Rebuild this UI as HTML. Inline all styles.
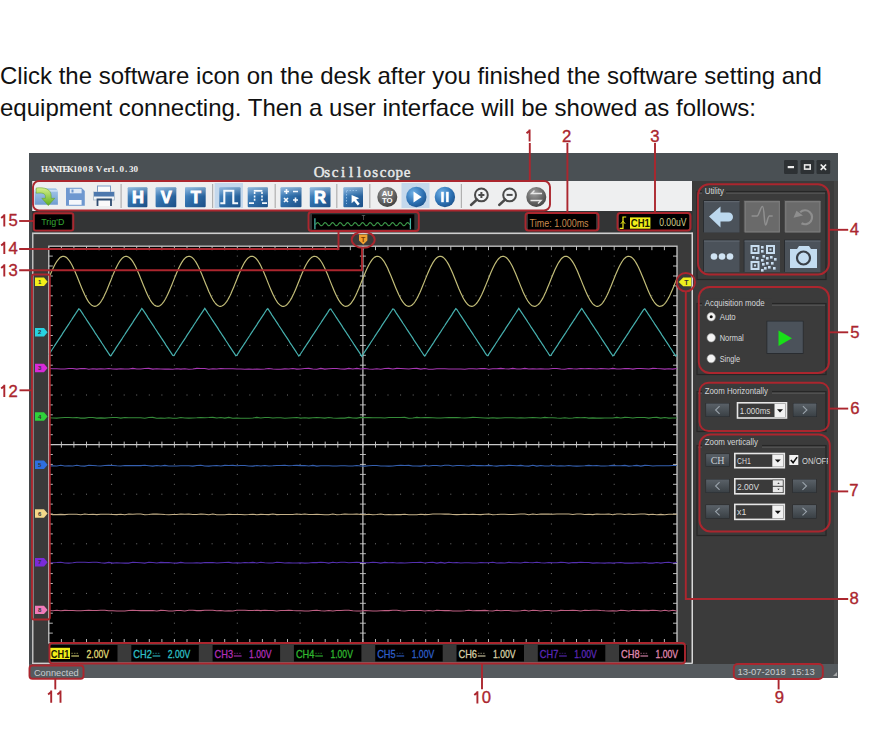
<!DOCTYPE html>
<html><head><meta charset="utf-8"><style>
html,body{margin:0;padding:0;background:#fff;width:871px;height:729px;overflow:hidden}
.p{position:absolute;left:0;font-family:"Liberation Sans",sans-serif;font-size:24px;color:#111;white-space:nowrap;line-height:1}
svg{position:absolute;left:0;top:0}
</style></head><body>
<div class="p" style="top:63.8px">Click the software icon on the desk after you finished the software setting and</div>
<div class="p" style="top:96.4px">equipment connecting. Then a user interface will be showed as follows:</div>
<svg width="871" height="729" viewBox="0 0 871 729" font-family="Liberation Sans">
<defs>
<linearGradient id="gblue" x1="0" y1="0" x2="1" y2="1"><stop offset="0" stop-color="#5b97cf"/><stop offset="0.45" stop-color="#2f6fab"/><stop offset="1" stop-color="#1c4f86"/></linearGradient>
<linearGradient id="ghl" x1="0" y1="0" x2="0" y2="1"><stop offset="0" stop-color="#ffffff" stop-opacity="0.35"/><stop offset="1" stop-color="#ffffff" stop-opacity="0"/></linearGradient>
<linearGradient id="gfold" x1="0" y1="0" x2="0" y2="1"><stop offset="0" stop-color="#a9c9ea"/><stop offset="1" stop-color="#6f9dd0"/></linearGradient>
<linearGradient id="ggreen" x1="0" y1="0" x2="0" y2="1"><stop offset="0" stop-color="#d6f08a"/><stop offset="1" stop-color="#5eae1e"/></linearGradient>
<radialGradient id="ggray" cx="0.4" cy="0.3" r="0.75"><stop offset="0" stop-color="#9a9a9a"/><stop offset="1" stop-color="#3c3c3c"/></radialGradient>
<radialGradient id="ggray2" cx="0.4" cy="0.3" r="0.75"><stop offset="0" stop-color="#a0a0a0"/><stop offset="1" stop-color="#404040"/></radialGradient>
<radialGradient id="gcirc" cx="0.35" cy="0.3" r="0.8"><stop offset="0" stop-color="#6fb0e6"/><stop offset="0.6" stop-color="#2e72b4"/><stop offset="1" stop-color="#1a4f88"/></radialGradient>
<linearGradient id="gbtn" x1="0" y1="0" x2="0" y2="1"><stop offset="0" stop-color="#5a6168"/><stop offset="1" stop-color="#3a4045"/></linearGradient>
</defs>
<rect x="29" y="153" width="809" height="525" fill="#3a3a3a"/>
<rect x="29" y="153" width="809" height="28" fill="#4a5054"/>
<text x="44.6 50.2 55.7 60.4 65.4 70.5 75.2 79.8 85 90.8 99 105.6 109.5 113 116.8 121.7 126 131.3 135.8" y="171.6" font-family="Liberation Serif" font-weight="bold" font-size="9" fill="#f2f2f2" text-anchor="middle">HANTEK1008Ver1.0.30</text>
<text x="319.2 327.2 335.2 343.2 351.2 359.2 367.2 375.2 383.2 391.2 399.2 407.2" y="176.6" font-family="Liberation Serif" font-size="15" fill="#e8eaea" stroke="#e8eaea" stroke-width="0.45" text-anchor="middle">Oscilloscope</text>
<rect x="784" y="160" width="13.7" height="14" rx="1.2" fill="#2d3134"/>
<rect x="787.7" y="166" width="6.3" height="2.2" fill="#eeeeee"/>
<rect x="800.5" y="160" width="13.7" height="14" rx="1.2" fill="#2d3134"/>
<rect x="804.6" y="164.9" width="5.6" height="4.2" fill="none" stroke="#e8e8e8" stroke-width="1.6"/>
<rect x="816.5" y="160" width="13.7" height="14" rx="1.2" fill="#2d3134"/>
<path d="M820.7 164.5 L826.1 169.8 M826.1 164.5 L820.7 169.8" stroke="#f0f0f0" stroke-width="1.7"/>
<rect x="32" y="181" width="660" height="30" fill="#eeeff0"/>
<rect x="29" y="211" width="664" height="22" fill="#333435"/>
<rect x="29" y="181" width="3.2" height="483" fill="#43474a"/>
<rect x="32" y="232.5" width="660.5" height="1.6" fill="#cfcfcf"/>
<rect x="32" y="233" width="1.5" height="431" fill="#bdbdbd"/>
<rect x="691.5" y="232.5" width="1.6" height="431" fill="#d8d8d8"/>
<rect x="32" y="662.6" width="660.5" height="1.5" fill="#cfcfcf"/>
<rect x="29" y="664" width="809" height="14" fill="#555a5e"/>
<text x="33.9" y="675.7" font-family="Liberation Sans" font-size="9.7" fill="#c8ccd0" textLength="44.8" lengthAdjust="spacingAndGlyphs">Connected</text>
<text x="737.4" y="675.4" font-family="Liberation Sans" font-size="9" fill="#c8ccd0" textLength="77.3" lengthAdjust="spacingAndGlyphs">13-07-2018&#160;&#160;15:13</text>
<rect x="693" y="181" width="145" height="483" fill="#3b3b3b"/>
<rect x="834" y="181" width="4" height="483" fill="#454545"/>
<rect x="48.8" y="246.2" width="628.2" height="396.8" fill="#000"/>
<path d="M111.1 256.1h1M111.1 266h1M111.1 276h1M111.1 285.9h1M111.1 305.7h1M111.1 315.6h1M111.1 325.6h1M111.1 335.5h1M111.1 355.3h1M111.1 365.2h1M111.1 375.2h1M111.1 385.1h1M111.1 404.9h1M111.1 414.8h1M111.1 424.8h1M111.1 434.7h1M111.1 454.5h1M111.1 464.4h1M111.1 474.4h1M111.1 484.3h1M111.1 504.1h1M111.1 514h1M111.1 524h1M111.1 533.9h1M111.1 553.7h1M111.1 563.6h1M111.1 573.6h1M111.1 583.5h1M111.1 603.3h1M111.1 613.2h1M111.1 623.2h1M111.1 633.1h1M173.9 256.1h1M173.9 266h1M173.9 276h1M173.9 285.9h1M173.9 305.7h1M173.9 315.6h1M173.9 325.6h1M173.9 335.5h1M173.9 355.3h1M173.9 365.2h1M173.9 375.2h1M173.9 385.1h1M173.9 404.9h1M173.9 414.8h1M173.9 424.8h1M173.9 434.7h1M173.9 454.5h1M173.9 464.4h1M173.9 474.4h1M173.9 484.3h1M173.9 504.1h1M173.9 514h1M173.9 524h1M173.9 533.9h1M173.9 553.7h1M173.9 563.6h1M173.9 573.6h1M173.9 583.5h1M173.9 603.3h1M173.9 613.2h1M173.9 623.2h1M173.9 633.1h1M236.8 256.1h1M236.8 266h1M236.8 276h1M236.8 285.9h1M236.8 305.7h1M236.8 315.6h1M236.8 325.6h1M236.8 335.5h1M236.8 355.3h1M236.8 365.2h1M236.8 375.2h1M236.8 385.1h1M236.8 404.9h1M236.8 414.8h1M236.8 424.8h1M236.8 434.7h1M236.8 454.5h1M236.8 464.4h1M236.8 474.4h1M236.8 484.3h1M236.8 504.1h1M236.8 514h1M236.8 524h1M236.8 533.9h1M236.8 553.7h1M236.8 563.6h1M236.8 573.6h1M236.8 583.5h1M236.8 603.3h1M236.8 613.2h1M236.8 623.2h1M236.8 633.1h1M299.6 256.1h1M299.6 266h1M299.6 276h1M299.6 285.9h1M299.6 305.7h1M299.6 315.6h1M299.6 325.6h1M299.6 335.5h1M299.6 355.3h1M299.6 365.2h1M299.6 375.2h1M299.6 385.1h1M299.6 404.9h1M299.6 414.8h1M299.6 424.8h1M299.6 434.7h1M299.6 454.5h1M299.6 464.4h1M299.6 474.4h1M299.6 484.3h1M299.6 504.1h1M299.6 514h1M299.6 524h1M299.6 533.9h1M299.6 553.7h1M299.6 563.6h1M299.6 573.6h1M299.6 583.5h1M299.6 603.3h1M299.6 613.2h1M299.6 623.2h1M299.6 633.1h1M425.2 256.1h1M425.2 266h1M425.2 276h1M425.2 285.9h1M425.2 305.7h1M425.2 315.6h1M425.2 325.6h1M425.2 335.5h1M425.2 355.3h1M425.2 365.2h1M425.2 375.2h1M425.2 385.1h1M425.2 404.9h1M425.2 414.8h1M425.2 424.8h1M425.2 434.7h1M425.2 454.5h1M425.2 464.4h1M425.2 474.4h1M425.2 484.3h1M425.2 504.1h1M425.2 514h1M425.2 524h1M425.2 533.9h1M425.2 553.7h1M425.2 563.6h1M425.2 573.6h1M425.2 583.5h1M425.2 603.3h1M425.2 613.2h1M425.2 623.2h1M425.2 633.1h1M488 256.1h1M488 266h1M488 276h1M488 285.9h1M488 305.7h1M488 315.6h1M488 325.6h1M488 335.5h1M488 355.3h1M488 365.2h1M488 375.2h1M488 385.1h1M488 404.9h1M488 414.8h1M488 424.8h1M488 434.7h1M488 454.5h1M488 464.4h1M488 474.4h1M488 484.3h1M488 504.1h1M488 514h1M488 524h1M488 533.9h1M488 553.7h1M488 563.6h1M488 573.6h1M488 583.5h1M488 603.3h1M488 613.2h1M488 623.2h1M488 633.1h1M550.9 256.1h1M550.9 266h1M550.9 276h1M550.9 285.9h1M550.9 305.7h1M550.9 315.6h1M550.9 325.6h1M550.9 335.5h1M550.9 355.3h1M550.9 365.2h1M550.9 375.2h1M550.9 385.1h1M550.9 404.9h1M550.9 414.8h1M550.9 424.8h1M550.9 434.7h1M550.9 454.5h1M550.9 464.4h1M550.9 474.4h1M550.9 484.3h1M550.9 504.1h1M550.9 514h1M550.9 524h1M550.9 533.9h1M550.9 553.7h1M550.9 563.6h1M550.9 573.6h1M550.9 583.5h1M550.9 603.3h1M550.9 613.2h1M550.9 623.2h1M550.9 633.1h1M613.7 256.1h1M613.7 266h1M613.7 276h1M613.7 285.9h1M613.7 305.7h1M613.7 315.6h1M613.7 325.6h1M613.7 335.5h1M613.7 355.3h1M613.7 365.2h1M613.7 375.2h1M613.7 385.1h1M613.7 404.9h1M613.7 414.8h1M613.7 424.8h1M613.7 434.7h1M613.7 454.5h1M613.7 464.4h1M613.7 474.4h1M613.7 484.3h1M613.7 504.1h1M613.7 514h1M613.7 524h1M613.7 533.9h1M613.7 553.7h1M613.7 563.6h1M613.7 573.6h1M613.7 583.5h1M613.7 603.3h1M613.7 613.2h1M613.7 623.2h1M613.7 633.1h1M60.9 295.8h1M73.4 295.8h1M86 295.8h1M98.6 295.8h1M111.1 295.8h1M123.7 295.8h1M136.2 295.8h1M148.8 295.8h1M161.4 295.8h1M173.9 295.8h1M186.5 295.8h1M199.1 295.8h1M211.6 295.8h1M224.2 295.8h1M236.8 295.8h1M249.3 295.8h1M261.9 295.8h1M274.5 295.8h1M287 295.8h1M299.6 295.8h1M312.1 295.8h1M324.7 295.8h1M337.3 295.8h1M349.8 295.8h1M362.4 295.8h1M375 295.8h1M387.5 295.8h1M400.1 295.8h1M412.7 295.8h1M425.2 295.8h1M437.8 295.8h1M450.3 295.8h1M462.9 295.8h1M475.5 295.8h1M488 295.8h1M500.6 295.8h1M513.2 295.8h1M525.7 295.8h1M538.3 295.8h1M550.9 295.8h1M563.4 295.8h1M576 295.8h1M588.6 295.8h1M601.1 295.8h1M613.7 295.8h1M626.2 295.8h1M638.8 295.8h1M651.4 295.8h1M663.9 295.8h1M60.9 345.4h1M73.4 345.4h1M86 345.4h1M98.6 345.4h1M111.1 345.4h1M123.7 345.4h1M136.2 345.4h1M148.8 345.4h1M161.4 345.4h1M173.9 345.4h1M186.5 345.4h1M199.1 345.4h1M211.6 345.4h1M224.2 345.4h1M236.8 345.4h1M249.3 345.4h1M261.9 345.4h1M274.5 345.4h1M287 345.4h1M299.6 345.4h1M312.1 345.4h1M324.7 345.4h1M337.3 345.4h1M349.8 345.4h1M362.4 345.4h1M375 345.4h1M387.5 345.4h1M400.1 345.4h1M412.7 345.4h1M425.2 345.4h1M437.8 345.4h1M450.3 345.4h1M462.9 345.4h1M475.5 345.4h1M488 345.4h1M500.6 345.4h1M513.2 345.4h1M525.7 345.4h1M538.3 345.4h1M550.9 345.4h1M563.4 345.4h1M576 345.4h1M588.6 345.4h1M601.1 345.4h1M613.7 345.4h1M626.2 345.4h1M638.8 345.4h1M651.4 345.4h1M663.9 345.4h1M60.9 395h1M73.4 395h1M86 395h1M98.6 395h1M111.1 395h1M123.7 395h1M136.2 395h1M148.8 395h1M161.4 395h1M173.9 395h1M186.5 395h1M199.1 395h1M211.6 395h1M224.2 395h1M236.8 395h1M249.3 395h1M261.9 395h1M274.5 395h1M287 395h1M299.6 395h1M312.1 395h1M324.7 395h1M337.3 395h1M349.8 395h1M362.4 395h1M375 395h1M387.5 395h1M400.1 395h1M412.7 395h1M425.2 395h1M437.8 395h1M450.3 395h1M462.9 395h1M475.5 395h1M488 395h1M500.6 395h1M513.2 395h1M525.7 395h1M538.3 395h1M550.9 395h1M563.4 395h1M576 395h1M588.6 395h1M601.1 395h1M613.7 395h1M626.2 395h1M638.8 395h1M651.4 395h1M663.9 395h1M60.9 494.2h1M73.4 494.2h1M86 494.2h1M98.6 494.2h1M111.1 494.2h1M123.7 494.2h1M136.2 494.2h1M148.8 494.2h1M161.4 494.2h1M173.9 494.2h1M186.5 494.2h1M199.1 494.2h1M211.6 494.2h1M224.2 494.2h1M236.8 494.2h1M249.3 494.2h1M261.9 494.2h1M274.5 494.2h1M287 494.2h1M299.6 494.2h1M312.1 494.2h1M324.7 494.2h1M337.3 494.2h1M349.8 494.2h1M362.4 494.2h1M375 494.2h1M387.5 494.2h1M400.1 494.2h1M412.7 494.2h1M425.2 494.2h1M437.8 494.2h1M450.3 494.2h1M462.9 494.2h1M475.5 494.2h1M488 494.2h1M500.6 494.2h1M513.2 494.2h1M525.7 494.2h1M538.3 494.2h1M550.9 494.2h1M563.4 494.2h1M576 494.2h1M588.6 494.2h1M601.1 494.2h1M613.7 494.2h1M626.2 494.2h1M638.8 494.2h1M651.4 494.2h1M663.9 494.2h1M60.9 543.8h1M73.4 543.8h1M86 543.8h1M98.6 543.8h1M111.1 543.8h1M123.7 543.8h1M136.2 543.8h1M148.8 543.8h1M161.4 543.8h1M173.9 543.8h1M186.5 543.8h1M199.1 543.8h1M211.6 543.8h1M224.2 543.8h1M236.8 543.8h1M249.3 543.8h1M261.9 543.8h1M274.5 543.8h1M287 543.8h1M299.6 543.8h1M312.1 543.8h1M324.7 543.8h1M337.3 543.8h1M349.8 543.8h1M362.4 543.8h1M375 543.8h1M387.5 543.8h1M400.1 543.8h1M412.7 543.8h1M425.2 543.8h1M437.8 543.8h1M450.3 543.8h1M462.9 543.8h1M475.5 543.8h1M488 543.8h1M500.6 543.8h1M513.2 543.8h1M525.7 543.8h1M538.3 543.8h1M550.9 543.8h1M563.4 543.8h1M576 543.8h1M588.6 543.8h1M601.1 543.8h1M613.7 543.8h1M626.2 543.8h1M638.8 543.8h1M651.4 543.8h1M663.9 543.8h1M60.9 593.4h1M73.4 593.4h1M86 593.4h1M98.6 593.4h1M111.1 593.4h1M123.7 593.4h1M136.2 593.4h1M148.8 593.4h1M161.4 593.4h1M173.9 593.4h1M186.5 593.4h1M199.1 593.4h1M211.6 593.4h1M224.2 593.4h1M236.8 593.4h1M249.3 593.4h1M261.9 593.4h1M274.5 593.4h1M287 593.4h1M299.6 593.4h1M312.1 593.4h1M324.7 593.4h1M337.3 593.4h1M349.8 593.4h1M362.4 593.4h1M375 593.4h1M387.5 593.4h1M400.1 593.4h1M412.7 593.4h1M425.2 593.4h1M437.8 593.4h1M450.3 593.4h1M462.9 593.4h1M475.5 593.4h1M488 593.4h1M500.6 593.4h1M513.2 593.4h1M525.7 593.4h1M538.3 593.4h1M550.9 593.4h1M563.4 593.4h1M576 593.4h1M588.6 593.4h1M601.1 593.4h1M613.7 593.4h1M626.2 593.4h1M638.8 593.4h1M651.4 593.4h1M663.9 593.4h1" stroke="#737373" stroke-width="1"/>
<path d="M61.4 246.2v4M61.4 643v-4M73.9 246.2v4M73.9 643v-4M86.5 246.2v4M86.5 643v-4M99.1 246.2v4M99.1 643v-4M111.6 246.2v4M111.6 643v-4M124.2 246.2v4M124.2 643v-4M136.7 246.2v4M136.7 643v-4M149.3 246.2v4M149.3 643v-4M161.9 246.2v4M161.9 643v-4M174.4 246.2v4M174.4 643v-4M187 246.2v4M187 643v-4M199.6 246.2v4M199.6 643v-4M212.1 246.2v4M212.1 643v-4M224.7 246.2v4M224.7 643v-4M237.3 246.2v4M237.3 643v-4M249.8 246.2v4M249.8 643v-4M262.4 246.2v4M262.4 643v-4M275 246.2v4M275 643v-4M287.5 246.2v4M287.5 643v-4M300.1 246.2v4M300.1 643v-4M312.6 246.2v4M312.6 643v-4M325.2 246.2v4M325.2 643v-4M337.8 246.2v4M337.8 643v-4M350.3 246.2v4M350.3 643v-4M362.9 246.2v4M362.9 643v-4M375.5 246.2v4M375.5 643v-4M388 246.2v4M388 643v-4M400.6 246.2v4M400.6 643v-4M413.2 246.2v4M413.2 643v-4M425.7 246.2v4M425.7 643v-4M438.3 246.2v4M438.3 643v-4M450.8 246.2v4M450.8 643v-4M463.4 246.2v4M463.4 643v-4M476 246.2v4M476 643v-4M488.5 246.2v4M488.5 643v-4M501.1 246.2v4M501.1 643v-4M513.7 246.2v4M513.7 643v-4M526.2 246.2v4M526.2 643v-4M538.8 246.2v4M538.8 643v-4M551.4 246.2v4M551.4 643v-4M563.9 246.2v4M563.9 643v-4M576.5 246.2v4M576.5 643v-4M589.1 246.2v4M589.1 643v-4M601.6 246.2v4M601.6 643v-4M614.2 246.2v4M614.2 643v-4M626.7 246.2v4M626.7 643v-4M639.3 246.2v4M639.3 643v-4M651.9 246.2v4M651.9 643v-4M664.4 246.2v4M664.4 643v-4M48.8 256.1h4M677 256.1h-4M48.8 266h4M677 266h-4M48.8 276h4M677 276h-4M48.8 285.9h4M677 285.9h-4M48.8 295.8h4M677 295.8h-4M48.8 305.7h4M677 305.7h-4M48.8 315.6h4M677 315.6h-4M48.8 325.6h4M677 325.6h-4M48.8 335.5h4M677 335.5h-4M48.8 345.4h4M677 345.4h-4M48.8 355.3h4M677 355.3h-4M48.8 365.2h4M677 365.2h-4M48.8 375.2h4M677 375.2h-4M48.8 385.1h4M677 385.1h-4M48.8 395h4M677 395h-4M48.8 404.9h4M677 404.9h-4M48.8 414.8h4M677 414.8h-4M48.8 424.8h4M677 424.8h-4M48.8 434.7h4M677 434.7h-4M48.8 444.6h4M677 444.6h-4M48.8 454.5h4M677 454.5h-4M48.8 464.4h4M677 464.4h-4M48.8 474.4h4M677 474.4h-4M48.8 484.3h4M677 484.3h-4M48.8 494.2h4M677 494.2h-4M48.8 504.1h4M677 504.1h-4M48.8 514h4M677 514h-4M48.8 524h4M677 524h-4M48.8 533.9h4M677 533.9h-4M48.8 543.8h4M677 543.8h-4M48.8 553.7h4M677 553.7h-4M48.8 563.6h4M677 563.6h-4M48.8 573.6h4M677 573.6h-4M48.8 583.5h4M677 583.5h-4M48.8 593.4h4M677 593.4h-4M48.8 603.3h4M677 603.3h-4M48.8 613.2h4M677 613.2h-4M48.8 623.2h4M677 623.2h-4M48.8 633.1h4M677 633.1h-4M61.4 441.6v6M73.9 441.6v6M86.5 441.6v6M99.1 441.6v6M111.6 441.6v6M124.2 441.6v6M136.7 441.6v6M149.3 441.6v6M161.9 441.6v6M174.4 441.6v6M187 441.6v6M199.6 441.6v6M212.1 441.6v6M224.7 441.6v6M237.3 441.6v6M249.8 441.6v6M262.4 441.6v6M275 441.6v6M287.5 441.6v6M300.1 441.6v6M312.6 441.6v6M325.2 441.6v6M337.8 441.6v6M350.3 441.6v6M362.9 441.6v6M375.5 441.6v6M388 441.6v6M400.6 441.6v6M413.2 441.6v6M425.7 441.6v6M438.3 441.6v6M450.8 441.6v6M463.4 441.6v6M476 441.6v6M488.5 441.6v6M501.1 441.6v6M513.7 441.6v6M526.2 441.6v6M538.8 441.6v6M551.4 441.6v6M563.9 441.6v6M576.5 441.6v6M589.1 441.6v6M601.6 441.6v6M614.2 441.6v6M626.7 441.6v6M639.3 441.6v6M651.9 441.6v6M664.4 441.6v6M359.9 256.1h6M359.9 266h6M359.9 276h6M359.9 285.9h6M359.9 295.8h6M359.9 305.7h6M359.9 315.6h6M359.9 325.6h6M359.9 335.5h6M359.9 345.4h6M359.9 355.3h6M359.9 365.2h6M359.9 375.2h6M359.9 385.1h6M359.9 395h6M359.9 404.9h6M359.9 414.8h6M359.9 424.8h6M359.9 434.7h6M359.9 444.6h6M359.9 454.5h6M359.9 464.4h6M359.9 474.4h6M359.9 484.3h6M359.9 494.2h6M359.9 504.1h6M359.9 514h6M359.9 524h6M359.9 533.9h6M359.9 543.8h6M359.9 553.7h6M359.9 563.6h6M359.9 573.6h6M359.9 583.5h6M359.9 593.4h6M359.9 603.3h6M359.9 613.2h6M359.9 623.2h6M359.9 633.1h6" stroke="#b8b8b8" stroke-width="1"/>
<path d="M362.9 246.2V643 M48.8 444.6H677" stroke="#c8c8c8" stroke-width="1.2"/>
<rect x="48.8" y="246.2" width="628.2" height="396.8" fill="none" stroke="#c8c8c8" stroke-width="1.3"/>
<path d="M48.8,278.3 L49.8,275.8 L50.8,273.4 L51.8,271.1 L52.8,268.9 L53.8,266.8 L54.8,264.8 L55.8,263 L56.8,261.4 L57.8,260 L58.8,258.8 L59.8,257.8 L60.8,257.1 L61.8,256.6 L62.8,256.3 L63.8,256.3 L64.8,256.6 L65.8,257.1 L66.8,257.8 L67.8,258.8 L68.8,260 L69.8,261.4 L70.8,263 L71.8,264.8 L72.8,266.8 L73.8,268.9 L74.8,271.1 L75.8,273.4 L76.8,275.8 L77.8,278.3 L78.8,280.8 L79.8,283.3 L80.8,285.8 L81.8,288.2 L82.8,290.6 L83.8,292.8 L84.8,295 L85.8,297 L86.8,298.9 L87.8,300.6 L88.8,302.1 L89.8,303.3 L90.8,304.4 L91.8,305.2 L92.8,305.8 L93.8,306.2 L94.8,306.3 L95.8,306.2 L96.8,305.8 L97.8,305.1 L98.8,304.2 L99.8,303.1 L100.8,301.8 L101.8,300.3 L102.8,298.6 L103.8,296.7 L104.8,294.6 L105.8,292.4 L106.8,290.2 L107.8,287.8 L108.8,285.3 L109.8,282.8 L110.8,280.4 L111.8,277.9 L112.8,275.4 L113.8,273 L114.8,270.7 L115.8,268.5 L116.8,266.4 L117.8,264.5 L118.8,262.7 L119.8,261.1 L120.8,259.8 L121.8,258.6 L122.8,257.7 L123.8,257 L124.8,256.5 L125.8,256.3 L126.8,256.4 L127.8,256.7 L128.8,257.2 L129.8,258 L130.8,259 L131.8,260.2 L132.8,261.7 L133.8,263.3 L134.8,265.1 L135.8,267.1 L136.8,269.2 L137.8,271.5 L138.8,273.8 L139.8,276.3 L140.8,278.7 L141.8,281.2 L142.8,283.7 L143.8,286.2 L144.8,288.6 L145.8,291 L146.8,293.2 L147.8,295.4 L148.8,297.4 L149.8,299.2 L150.8,300.8 L151.8,302.3 L152.8,303.5 L153.8,304.6 L154.8,305.4 L155.8,305.9 L156.8,306.2 L157.8,306.3 L158.8,306.1 L159.8,305.7 L160.8,305 L161.8,304.1 L162.8,302.9 L163.8,301.6 L164.8,300 L165.8,298.2 L166.8,296.3 L167.8,294.2 L168.8,292 L169.8,289.7 L170.8,287.3 L171.8,284.9 L172.8,282.4 L173.8,279.9 L174.8,277.4 L175.8,275 L176.8,272.6 L177.8,270.3 L178.8,268.1 L179.8,266 L180.8,264.1 L181.8,262.4 L182.8,260.9 L183.8,259.5 L184.8,258.4 L185.8,257.5 L186.8,256.9 L187.8,256.5 L188.8,256.3 L189.8,256.4 L190.8,256.7 L191.8,257.3 L192.8,258.1 L193.8,259.2 L194.8,260.5 L195.8,261.9 L196.8,263.6 L197.8,265.5 L198.8,267.5 L199.8,269.6 L200.8,271.9 L201.8,274.3 L202.8,276.7 L203.8,279.2 L204.8,281.7 L205.8,284.2 L206.8,286.6 L207.8,289 L208.8,291.4 L209.8,293.6 L210.8,295.7 L211.8,297.7 L212.8,299.5 L213.8,301.1 L214.8,302.5 L215.8,303.8 L216.8,304.7 L217.8,305.5 L218.8,306 L219.8,306.3 L220.8,306.3 L221.8,306 L222.8,305.6 L223.8,304.8 L224.8,303.9 L225.8,302.7 L226.8,301.3 L227.8,299.7 L228.8,297.9 L229.8,296 L230.8,293.9 L231.8,291.6 L232.8,289.3 L233.8,286.9 L234.8,284.4 L235.8,282 L236.8,279.5 L237.8,277 L238.8,274.5 L239.8,272.2 L240.8,269.9 L241.8,267.7 L242.8,265.7 L243.8,263.8 L244.8,262.1 L245.8,260.6 L246.8,259.3 L247.8,258.2 L248.8,257.4 L249.8,256.8 L250.8,256.4 L251.8,256.3 L252.8,256.4 L253.8,256.8 L254.8,257.4 L255.8,258.3 L256.8,259.4 L257.8,260.7 L258.8,262.2 L259.8,263.9 L260.8,265.8 L261.8,267.9 L262.8,270 L263.8,272.3 L264.8,274.7 L265.8,277.1 L266.8,279.6 L267.8,282.1 L268.8,284.6 L269.8,287.1 L270.8,289.5 L271.8,291.8 L272.8,294 L273.8,296.1 L274.8,298 L275.8,299.8 L276.8,301.4 L277.8,302.8 L278.8,303.9 L279.8,304.9 L280.8,305.6 L281.8,306.1 L282.8,306.3 L283.8,306.3 L284.8,306 L285.8,305.4 L286.8,304.7 L287.8,303.7 L288.8,302.4 L289.8,301 L290.8,299.4 L291.8,297.6 L292.8,295.6 L293.8,293.5 L294.8,291.2 L295.8,288.9 L296.8,286.5 L297.8,284 L298.8,281.5 L299.8,279 L300.8,276.5 L301.8,274.1 L302.8,271.7 L303.8,269.5 L304.8,267.3 L305.8,265.3 L306.8,263.5 L307.8,261.8 L308.8,260.4 L309.8,259.1 L310.8,258.1 L311.8,257.3 L312.8,256.7 L313.8,256.4 L314.8,256.3 L315.8,256.5 L316.8,256.9 L317.8,257.6 L318.8,258.5 L319.8,259.6 L320.8,261 L321.8,262.5 L322.8,264.3 L323.8,266.2 L324.8,268.3 L325.8,270.4 L326.8,272.7 L327.8,275.1 L328.8,277.6 L329.8,280.1 L330.8,282.6 L331.8,285.1 L332.8,287.5 L333.8,289.9 L334.8,292.2 L335.8,294.4 L336.8,296.5 L337.8,298.4 L338.8,300.1 L339.8,301.7 L340.8,303 L341.8,304.1 L342.8,305 L343.8,305.7 L344.8,306.1 L345.8,306.3 L346.8,306.2 L347.8,305.9 L348.8,305.3 L349.8,304.5 L350.8,303.5 L351.8,302.2 L352.8,300.7 L353.8,299.1 L354.8,297.2 L355.8,295.2 L356.8,293.1 L357.8,290.8 L358.8,288.5 L359.8,286 L360.8,283.5 L361.8,281 L362.8,278.6 L363.8,276.1 L364.8,273.7 L365.8,271.3 L366.8,269.1 L367.8,267 L368.8,265 L369.8,263.2 L370.8,261.6 L371.8,260.1 L372.8,258.9 L373.8,257.9 L374.8,257.1 L375.8,256.6 L376.8,256.3 L377.8,256.3 L378.8,256.5 L379.8,257 L380.8,257.7 L381.8,258.7 L382.8,259.9 L383.8,261.2 L384.8,262.8 L385.8,264.6 L386.8,266.5 L387.8,268.6 L388.8,270.9 L389.8,273.2 L390.8,275.6 L391.8,278 L392.8,280.5 L393.8,283 L394.8,285.5 L395.8,287.9 L396.8,290.3 L397.8,292.6 L398.8,294.8 L399.8,296.8 L400.8,298.7 L401.8,300.4 L402.8,301.9 L403.8,303.2 L404.8,304.3 L405.8,305.2 L406.8,305.8 L407.8,306.2 L408.8,306.3 L409.8,306.2 L410.8,305.8 L411.8,305.2 L412.8,304.3 L413.8,303.3 L414.8,302 L415.8,300.4 L416.8,298.7 L417.8,296.9 L418.8,294.8 L419.8,292.7 L420.8,290.4 L421.8,288 L422.8,285.6 L423.8,283.1 L424.8,280.6 L425.8,278.1 L426.8,275.6 L427.8,273.2 L428.8,270.9 L429.8,268.7 L430.8,266.6 L431.8,264.7 L432.8,262.9 L433.8,261.3 L434.8,259.9 L435.8,258.7 L436.8,257.8 L437.8,257 L438.8,256.6 L439.8,256.3 L440.8,256.3 L441.8,256.6 L442.8,257.1 L443.8,257.9 L444.8,258.9 L445.8,260.1 L446.8,261.5 L447.8,263.1 L448.8,264.9 L449.8,266.9 L450.8,269 L451.8,271.3 L452.8,273.6 L453.8,276 L454.8,278.5 L455.8,281 L456.8,283.5 L457.8,285.9 L458.8,288.4 L459.8,290.7 L460.8,293 L461.8,295.1 L462.8,297.2 L463.8,299 L464.8,300.7 L465.8,302.2 L466.8,303.4 L467.8,304.5 L468.8,305.3 L469.8,305.9 L470.8,306.2 L471.8,306.3 L472.8,306.1 L473.8,305.7 L474.8,305.1 L475.8,304.2 L476.8,303 L477.8,301.7 L478.8,300.2 L479.8,298.4 L480.8,296.5 L481.8,294.5 L482.8,292.3 L483.8,290 L484.8,287.6 L485.8,285.1 L486.8,282.6 L487.8,280.2 L488.8,277.7 L489.8,275.2 L490.8,272.8 L491.8,270.5 L492.8,268.3 L493.8,266.2 L494.8,264.3 L495.8,262.6 L496.8,261 L497.8,259.7 L498.8,258.5 L499.8,257.6 L500.8,256.9 L501.8,256.5 L502.8,256.3 L503.8,256.4 L504.8,256.7 L505.8,257.2 L506.8,258 L507.8,259.1 L508.8,260.3 L509.8,261.8 L510.8,263.5 L511.8,265.3 L512.8,267.3 L513.8,269.4 L514.8,271.7 L515.8,274 L516.8,276.5 L517.8,278.9 L518.8,281.4 L519.8,283.9 L520.8,286.4 L521.8,288.8 L522.8,291.2 L523.8,293.4 L524.8,295.5 L525.8,297.5 L526.8,299.3 L527.8,301 L528.8,302.4 L529.8,303.6 L530.8,304.6 L531.8,305.4 L532.8,306 L533.8,306.2 L534.8,306.3 L535.8,306.1 L536.8,305.6 L537.8,304.9 L538.8,304 L539.8,302.8 L540.8,301.4 L541.8,299.9 L542.8,298.1 L543.8,296.2 L544.8,294.1 L545.8,291.9 L546.8,289.5 L547.8,287.1 L548.8,284.7 L549.8,282.2 L550.8,279.7 L551.8,277.2 L552.8,274.8 L553.8,272.4 L554.8,270.1 L555.8,267.9 L556.8,265.9 L557.8,264 L558.8,262.3 L559.8,260.8 L560.8,259.4 L561.8,258.3 L562.8,257.5 L563.8,256.8 L564.8,256.4 L565.8,256.3 L566.8,256.4 L567.8,256.8 L568.8,257.4 L569.8,258.2 L570.8,259.3 L571.8,260.6 L572.8,262.1 L573.8,263.8 L574.8,265.6 L575.8,267.7 L576.8,269.8 L577.8,272.1 L578.8,274.5 L579.8,276.9 L580.8,279.4 L581.8,281.9 L582.8,284.4 L583.8,286.8 L584.8,289.2 L585.8,291.6 L586.8,293.8 L587.8,295.9 L588.8,297.8 L589.8,299.6 L590.8,301.2 L591.8,302.6 L592.8,303.8 L593.8,304.8 L594.8,305.5 L595.8,306 L596.8,306.3 L597.8,306.3 L598.8,306 L599.8,305.5 L600.8,304.8 L601.8,303.8 L602.8,302.6 L603.8,301.2 L604.8,299.5 L605.8,297.7 L606.8,295.8 L607.8,293.7 L608.8,291.5 L609.8,289.1 L610.8,286.7 L611.8,284.2 L612.8,281.8 L613.8,279.3 L614.8,276.8 L615.8,274.3 L616.8,272 L617.8,269.7 L618.8,267.6 L619.8,265.5 L620.8,263.7 L621.8,262 L622.8,260.5 L623.8,259.2 L624.8,258.2 L625.8,257.3 L626.8,256.7 L627.8,256.4 L628.8,256.3 L629.8,256.5 L630.8,256.9 L631.8,257.5 L632.8,258.4 L633.8,259.5 L634.8,260.8 L635.8,262.4 L636.8,264.1 L637.8,266 L638.8,268 L639.8,270.2 L640.8,272.5 L641.8,274.9 L642.8,277.3 L643.8,279.8 L644.8,282.3 L645.8,284.8 L646.8,287.3 L647.8,289.7 L648.8,292 L649.8,294.2 L650.8,296.3 L651.8,298.2 L652.8,299.9 L653.8,301.5 L654.8,302.9 L655.8,304 L656.8,305 L657.8,305.6 L658.8,306.1 L659.8,306.3 L660.8,306.2 L661.8,305.9 L662.8,305.4 L663.8,304.6 L664.8,303.6 L665.8,302.3 L666.8,300.9 L667.8,299.2 L668.8,297.4 L669.8,295.4 L670.8,293.3 L671.8,291 L672.8,288.7 L673.8,286.3 L674.8,283.8 L675.8,281.3 L676.8,278.8" fill="none" stroke="#c2bd78" stroke-width="1.2"/>
<path d="M48.8,354.6 L49.8,353.1 L50.8,351.6 L51.8,350 L52.8,348.5 L53.8,347 L54.8,345.4 L55.8,343.9 L56.8,342.4 L57.8,340.9 L58.8,339.3 L59.8,337.8 L60.8,336.3 L61.8,334.8 L62.8,333.2 L63.8,331.7 L64.8,330.2 L65.8,328.6 L66.8,327.1 L67.8,325.6 L68.8,324.1 L69.8,322.5 L70.8,321 L71.8,319.5 L72.8,317.9 L73.8,316.4 L74.8,314.9 L75.8,313.4 L76.8,311.8 L77.8,310.3 L78.8,308.8 L79.8,309.4 L80.8,310.9 L81.8,312.4 L82.8,313.9 L83.8,315.5 L84.8,317 L85.8,318.5 L86.8,320.1 L87.8,321.6 L88.8,323.1 L89.8,324.6 L90.8,326.2 L91.8,327.7 L92.8,329.2 L93.8,330.7 L94.8,332.3 L95.8,333.8 L96.8,335.3 L97.8,336.9 L98.8,338.4 L99.8,339.9 L100.8,341.4 L101.8,343 L102.8,344.5 L103.8,346 L104.8,347.6 L105.8,349.1 L106.8,350.6 L107.8,352.1 L108.8,353.7 L109.8,355.2 L110.8,355.9 L111.8,354.3 L112.8,352.8 L113.8,351.3 L114.8,349.8 L115.8,348.2 L116.8,346.7 L117.8,345.2 L118.8,343.6 L119.8,342.1 L120.8,340.6 L121.8,339.1 L122.8,337.5 L123.8,336 L124.8,334.5 L125.8,332.9 L126.8,331.4 L127.8,329.9 L128.8,328.4 L129.8,326.8 L130.8,325.3 L131.8,323.8 L132.8,322.3 L133.8,320.7 L134.8,319.2 L135.8,317.7 L136.8,316.1 L137.8,314.6 L138.8,313.1 L139.8,311.6 L140.8,310 L141.8,308.5 L142.8,309.6 L143.8,311.2 L144.8,312.7 L145.8,314.2 L146.8,315.7 L147.8,317.3 L148.8,318.8 L149.8,320.3 L150.8,321.9 L151.8,323.4 L152.8,324.9 L153.8,326.4 L154.8,328 L155.8,329.5 L156.8,331 L157.8,332.6 L158.8,334.1 L159.8,335.6 L160.8,337.1 L161.8,338.7 L162.8,340.2 L163.8,341.7 L164.8,343.2 L165.8,344.8 L166.8,346.3 L167.8,347.8 L168.8,349.4 L169.8,350.9 L170.8,352.4 L171.8,353.9 L172.8,355.5 L173.8,355.6 L174.8,354.1 L175.8,352.5 L176.8,351 L177.8,349.5 L178.8,348 L179.8,346.4 L180.8,344.9 L181.8,343.4 L182.8,341.8 L183.8,340.3 L184.8,338.8 L185.8,337.3 L186.8,335.7 L187.8,334.2 L188.8,332.7 L189.8,331.1 L190.8,329.6 L191.8,328.1 L192.8,326.6 L193.8,325 L194.8,323.5 L195.8,322 L196.8,320.4 L197.8,318.9 L198.8,317.4 L199.8,315.9 L200.8,314.3 L201.8,312.8 L202.8,311.3 L203.8,309.8 L204.8,308.4 L205.8,309.9 L206.8,311.4 L207.8,313 L208.8,314.5 L209.8,316 L210.8,317.5 L211.8,319.1 L212.8,320.6 L213.8,322.1 L214.8,323.7 L215.8,325.2 L216.8,326.7 L217.8,328.2 L218.8,329.8 L219.8,331.3 L220.8,332.8 L221.8,334.4 L222.8,335.9 L223.8,337.4 L224.8,338.9 L225.8,340.5 L226.8,342 L227.8,343.5 L228.8,345.1 L229.8,346.6 L230.8,348.1 L231.8,349.6 L232.8,351.2 L233.8,352.7 L234.8,354.2 L235.8,355.7 L236.8,355.3 L237.8,353.8 L238.8,352.3 L239.8,350.7 L240.8,349.2 L241.8,347.7 L242.8,346.2 L243.8,344.6 L244.8,343.1 L245.8,341.6 L246.8,340 L247.8,338.5 L248.8,337 L249.8,335.5 L250.8,333.9 L251.8,332.4 L252.8,330.9 L253.8,329.3 L254.8,327.8 L255.8,326.3 L256.8,324.8 L257.8,323.2 L258.8,321.7 L259.8,320.2 L260.8,318.6 L261.8,317.1 L262.8,315.6 L263.8,314.1 L264.8,312.5 L265.8,311 L266.8,309.5 L267.8,308.7 L268.8,310.2 L269.8,311.7 L270.8,313.2 L271.8,314.8 L272.8,316.3 L273.8,317.8 L274.8,319.3 L275.8,320.9 L276.8,322.4 L277.8,323.9 L278.8,325.5 L279.8,327 L280.8,328.5 L281.8,330 L282.8,331.6 L283.8,333.1 L284.8,334.6 L285.8,336.2 L286.8,337.7 L287.8,339.2 L288.8,340.7 L289.8,342.3 L290.8,343.8 L291.8,345.3 L292.8,346.9 L293.8,348.4 L294.8,349.9 L295.8,351.4 L296.8,353 L297.8,354.5 L298.8,356 L299.8,355 L300.8,353.5 L301.8,352 L302.8,350.5 L303.8,348.9 L304.8,347.4 L305.8,345.9 L306.8,344.3 L307.8,342.8 L308.8,341.3 L309.8,339.8 L310.8,338.2 L311.8,336.7 L312.8,335.2 L313.8,333.7 L314.8,332.1 L315.8,330.6 L316.8,329.1 L317.8,327.5 L318.8,326 L319.8,324.5 L320.8,323 L321.8,321.4 L322.8,319.9 L323.8,318.4 L324.8,316.8 L325.8,315.3 L326.8,313.8 L327.8,312.3 L328.8,310.7 L329.8,309.2 L330.8,308.9 L331.8,310.5 L332.8,312 L333.8,313.5 L334.8,315 L335.8,316.6 L336.8,318.1 L337.8,319.6 L338.8,321.2 L339.8,322.7 L340.8,324.2 L341.8,325.7 L342.8,327.3 L343.8,328.8 L344.8,330.3 L345.8,331.8 L346.8,333.4 L347.8,334.9 L348.8,336.4 L349.8,338 L350.8,339.5 L351.8,341 L352.8,342.5 L353.8,344.1 L354.8,345.6 L355.8,347.1 L356.8,348.7 L357.8,350.2 L358.8,351.7 L359.8,353.2 L360.8,354.8 L361.8,356.3 L362.8,354.8 L363.8,353.2 L364.8,351.7 L365.8,350.2 L366.8,348.7 L367.8,347.1 L368.8,345.6 L369.8,344.1 L370.8,342.5 L371.8,341 L372.8,339.5 L373.8,338 L374.8,336.4 L375.8,334.9 L376.8,333.4 L377.8,331.8 L378.8,330.3 L379.8,328.8 L380.8,327.3 L381.8,325.7 L382.8,324.2 L383.8,322.7 L384.8,321.2 L385.8,319.6 L386.8,318.1 L387.8,316.6 L388.8,315 L389.8,313.5 L390.8,312 L391.8,310.5 L392.8,308.9 L393.8,309.2 L394.8,310.7 L395.8,312.3 L396.8,313.8 L397.8,315.3 L398.8,316.8 L399.8,318.4 L400.8,319.9 L401.8,321.4 L402.8,323 L403.8,324.5 L404.8,326 L405.8,327.5 L406.8,329.1 L407.8,330.6 L408.8,332.1 L409.8,333.7 L410.8,335.2 L411.8,336.7 L412.8,338.2 L413.8,339.8 L414.8,341.3 L415.8,342.8 L416.8,344.3 L417.8,345.9 L418.8,347.4 L419.8,348.9 L420.8,350.5 L421.8,352 L422.8,353.5 L423.8,355 L424.8,356 L425.8,354.5 L426.8,353 L427.8,351.4 L428.8,349.9 L429.8,348.4 L430.8,346.9 L431.8,345.3 L432.8,343.8 L433.8,342.3 L434.8,340.7 L435.8,339.2 L436.8,337.7 L437.8,336.2 L438.8,334.6 L439.8,333.1 L440.8,331.6 L441.8,330 L442.8,328.5 L443.8,327 L444.8,325.5 L445.8,323.9 L446.8,322.4 L447.8,320.9 L448.8,319.3 L449.8,317.8 L450.8,316.3 L451.8,314.8 L452.8,313.2 L453.8,311.7 L454.8,310.2 L455.8,308.7 L456.8,309.5 L457.8,311 L458.8,312.5 L459.8,314.1 L460.8,315.6 L461.8,317.1 L462.8,318.6 L463.8,320.2 L464.8,321.7 L465.8,323.2 L466.8,324.8 L467.8,326.3 L468.8,327.8 L469.8,329.3 L470.8,330.9 L471.8,332.4 L472.8,333.9 L473.8,335.5 L474.8,337 L475.8,338.5 L476.8,340 L477.8,341.6 L478.8,343.1 L479.8,344.6 L480.8,346.2 L481.8,347.7 L482.8,349.2 L483.8,350.7 L484.8,352.3 L485.8,353.8 L486.8,355.3 L487.8,355.7 L488.8,354.2 L489.8,352.7 L490.8,351.2 L491.8,349.6 L492.8,348.1 L493.8,346.6 L494.8,345.1 L495.8,343.5 L496.8,342 L497.8,340.5 L498.8,338.9 L499.8,337.4 L500.8,335.9 L501.8,334.4 L502.8,332.8 L503.8,331.3 L504.8,329.8 L505.8,328.2 L506.8,326.7 L507.8,325.2 L508.8,323.7 L509.8,322.1 L510.8,320.6 L511.8,319.1 L512.8,317.5 L513.8,316 L514.8,314.5 L515.8,313 L516.8,311.4 L517.8,309.9 L518.8,308.4 L519.8,309.8 L520.8,311.3 L521.8,312.8 L522.8,314.3 L523.8,315.9 L524.8,317.4 L525.8,318.9 L526.8,320.4 L527.8,322 L528.8,323.5 L529.8,325 L530.8,326.6 L531.8,328.1 L532.8,329.6 L533.8,331.1 L534.8,332.7 L535.8,334.2 L536.8,335.7 L537.8,337.3 L538.8,338.8 L539.8,340.3 L540.8,341.8 L541.8,343.4 L542.8,344.9 L543.8,346.4 L544.8,348 L545.8,349.5 L546.8,351 L547.8,352.5 L548.8,354.1 L549.8,355.6 L550.8,355.5 L551.8,353.9 L552.8,352.4 L553.8,350.9 L554.8,349.4 L555.8,347.8 L556.8,346.3 L557.8,344.8 L558.8,343.2 L559.8,341.7 L560.8,340.2 L561.8,338.7 L562.8,337.1 L563.8,335.6 L564.8,334.1 L565.8,332.6 L566.8,331 L567.8,329.5 L568.8,328 L569.8,326.4 L570.8,324.9 L571.8,323.4 L572.8,321.9 L573.8,320.3 L574.8,318.8 L575.8,317.3 L576.8,315.7 L577.8,314.2 L578.8,312.7 L579.8,311.2 L580.8,309.6 L581.8,308.5 L582.8,310 L583.8,311.6 L584.8,313.1 L585.8,314.6 L586.8,316.1 L587.8,317.7 L588.8,319.2 L589.8,320.7 L590.8,322.3 L591.8,323.8 L592.8,325.3 L593.8,326.8 L594.8,328.4 L595.8,329.9 L596.8,331.4 L597.8,332.9 L598.8,334.5 L599.8,336 L600.8,337.5 L601.8,339.1 L602.8,340.6 L603.8,342.1 L604.8,343.6 L605.8,345.2 L606.8,346.7 L607.8,348.2 L608.8,349.8 L609.8,351.3 L610.8,352.8 L611.8,354.3 L612.8,355.9 L613.8,355.2 L614.8,353.7 L615.8,352.1 L616.8,350.6 L617.8,349.1 L618.8,347.6 L619.8,346 L620.8,344.5 L621.8,343 L622.8,341.4 L623.8,339.9 L624.8,338.4 L625.8,336.9 L626.8,335.3 L627.8,333.8 L628.8,332.3 L629.8,330.7 L630.8,329.2 L631.8,327.7 L632.8,326.2 L633.8,324.6 L634.8,323.1 L635.8,321.6 L636.8,320.1 L637.8,318.5 L638.8,317 L639.8,315.5 L640.8,313.9 L641.8,312.4 L642.8,310.9 L643.8,309.4 L644.8,308.8 L645.8,310.3 L646.8,311.8 L647.8,313.4 L648.8,314.9 L649.8,316.4 L650.8,317.9 L651.8,319.5 L652.8,321 L653.8,322.5 L654.8,324.1 L655.8,325.6 L656.8,327.1 L657.8,328.6 L658.8,330.2 L659.8,331.7 L660.8,333.2 L661.8,334.8 L662.8,336.3 L663.8,337.8 L664.8,339.3 L665.8,340.9 L666.8,342.4 L667.8,343.9 L668.8,345.4 L669.8,347 L670.8,348.5 L671.8,350 L672.8,351.6 L673.8,353.1 L674.8,354.6 L675.8,356.1 L676.8,354.9" fill="none" stroke="#46b0ae" stroke-width="1.2"/>
<path d="M48.8,368.6 L52.8,368.8 L56.8,368.7 L60.8,368.9 L64.8,368.9 L68.8,368.4 L72.8,368.4 L76.8,369.1 L80.8,368.6 L84.8,368.6 L88.8,369.2 L92.8,368.8 L96.8,369.1 L100.8,368.8 L104.8,368.9 L108.8,368.5 L112.8,368.9 L116.8,369.1 L120.8,368.8 L124.8,369 L128.8,369 L132.8,368.4 L136.8,369 L140.8,368.9 L144.8,368.6 L148.8,368.4 L152.8,369.1 L156.8,368.8 L160.8,369 L164.8,369.1 L168.8,369 L172.8,369.2 L176.8,368.7 L180.8,369.1 L184.8,368.8 L188.8,369.2 L192.8,369.1 L196.8,368.4 L200.8,368.5 L204.8,368.5 L208.8,369.2 L212.8,368.7 L216.8,368.9 L220.8,368.6 L224.8,368.8 L228.8,368.7 L232.8,368.7 L236.8,368.9 L240.8,368.9 L244.8,369.2 L248.8,369 L252.8,369.2 L256.8,369.1 L260.8,369.2 L264.8,369 L268.8,368.5 L272.8,369.1 L276.8,369.2 L280.8,369.2 L284.8,368.9 L288.8,369 L292.8,368.5 L296.8,369.1 L300.8,368.9 L304.8,368.6 L308.8,368.4 L312.8,369.1 L316.8,369.2 L320.8,368.4 L324.8,369.1 L328.8,368.7 L332.8,368.5 L336.8,368.6 L340.8,369 L344.8,369.1 L348.8,368.4 L352.8,368.9 L356.8,368.4 L360.8,369 L364.8,368.6 L368.8,369.1 L372.8,369.2 L376.8,368.8 L380.8,369.2 L384.8,368.6 L388.8,368.4 L392.8,368.9 L396.8,368.4 L400.8,368.5 L404.8,368.7 L408.8,368.9 L412.8,368.5 L416.8,368.4 L420.8,369.1 L424.8,368.6 L428.8,369.2 L432.8,369.2 L436.8,368.7 L440.8,368.8 L444.8,368.8 L448.8,368.9 L452.8,368.9 L456.8,368.9 L460.8,368.9 L464.8,369.2 L468.8,368.8 L472.8,368.7 L476.8,369 L480.8,368.6 L484.8,368.6 L488.8,369.2 L492.8,368.8 L496.8,368.8 L500.8,368.4 L504.8,368.7 L508.8,368.9 L512.8,368.4 L516.8,368.9 L520.8,368.9 L524.8,368.4 L528.8,368.9 L532.8,368.8 L536.8,369 L540.8,368.7 L544.8,369 L548.8,369 L552.8,368.4 L556.8,368.4 L560.8,369 L564.8,369.2 L568.8,368.6 L572.8,368.8 L576.8,368.9 L580.8,368.6 L584.8,368.7 L588.8,368.6 L592.8,368.7 L596.8,368.9 L600.8,368.6 L604.8,368.7 L608.8,369 L612.8,368.4 L616.8,368.9 L620.8,369 L624.8,368.6 L628.8,368.6 L632.8,369.1 L636.8,368.6 L640.8,368.5 L644.8,368.7 L648.8,369 L652.8,368.4 L656.8,368.6 L660.8,368.7 L664.8,369.1 L668.8,368.7 L672.8,369.1 L676.8,368.5" fill="none" stroke="#a838b4" stroke-width="1.05"/>
<path d="M48.8,417.7 L52.8,417.9 L56.8,418.1 L60.8,417.8 L64.8,417.6 L68.8,417.5 L72.8,417.8 L76.8,417.5 L80.8,418.1 L84.8,418.1 L88.8,417.5 L92.8,417.6 L96.8,418.1 L100.8,417.9 L104.8,418.1 L108.8,417.7 L112.8,417.5 L116.8,417.6 L120.8,418.1 L124.8,417.6 L128.8,417.7 L132.8,417.7 L136.8,417.7 L140.8,417.7 L144.8,418.2 L148.8,417.5 L152.8,417.4 L156.8,418.2 L160.8,418.1 L164.8,418.2 L168.8,417.7 L172.8,418.2 L176.8,418.2 L180.8,417.5 L184.8,418 L188.8,418.1 L192.8,417.9 L196.8,417.8 L200.8,417.6 L204.8,417.7 L208.8,417.6 L212.8,417.4 L216.8,417.9 L220.8,417.6 L224.8,418.1 L228.8,417.4 L232.8,418.2 L236.8,418 L240.8,418.2 L244.8,418.2 L248.8,418.2 L252.8,417.9 L256.8,417.4 L260.8,418 L264.8,417.5 L268.8,417.6 L272.8,417.9 L276.8,417.8 L280.8,417.7 L284.8,418.2 L288.8,417.9 L292.8,417.7 L296.8,417.6 L300.8,418.1 L304.8,417.8 L308.8,418.1 L312.8,417.7 L316.8,417.5 L320.8,417.8 L324.8,418.1 L328.8,417.5 L332.8,418.1 L336.8,418.2 L340.8,418.1 L344.8,418.1 L348.8,417.4 L352.8,417.9 L356.8,418.1 L360.8,417.4 L364.8,417.6 L368.8,417.6 L372.8,417.8 L376.8,417.7 L380.8,417.8 L384.8,418 L388.8,417.4 L392.8,417.4 L396.8,417.5 L400.8,417.5 L404.8,417.4 L408.8,418.2 L412.8,418.1 L416.8,417.4 L420.8,417.8 L424.8,417.6 L428.8,417.6 L432.8,417.7 L436.8,417.9 L440.8,417.9 L444.8,417.7 L448.8,417.5 L452.8,417.6 L456.8,417.5 L460.8,417.8 L464.8,418 L468.8,417.7 L472.8,417.4 L476.8,417.5 L480.8,417.7 L484.8,417.9 L488.8,418.1 L492.8,417.7 L496.8,418.1 L500.8,417.9 L504.8,417.7 L508.8,417.7 L512.8,417.8 L516.8,418 L520.8,417.7 L524.8,418 L528.8,417.8 L532.8,417.6 L536.8,417.8 L540.8,418 L544.8,417.4 L548.8,417.7 L552.8,417.7 L556.8,418.1 L560.8,418.2 L564.8,417.7 L568.8,418.2 L572.8,418.1 L576.8,417.6 L580.8,417.8 L584.8,417.5 L588.8,418.1 L592.8,417.9 L596.8,418.1 L600.8,418.1 L604.8,418 L608.8,418 L612.8,417.9 L616.8,417.4 L620.8,417.9 L624.8,417.4 L628.8,417.5 L632.8,418 L636.8,417.4 L640.8,417.4 L644.8,417.4 L648.8,418.1 L652.8,417.5 L656.8,417.4 L660.8,418.1 L664.8,417.5 L668.8,418.1 L672.8,418 L676.8,418.1" fill="none" stroke="#368c3a" stroke-width="1.05"/>
<path d="M48.8,466.1 L52.8,465.8 L56.8,466 L60.8,465.3 L64.8,465.9 L68.8,465.7 L72.8,465.9 L76.8,465.3 L80.8,465.9 L84.8,466.1 L88.8,465.3 L92.8,465.5 L96.8,465.8 L100.8,466 L104.8,465.5 L108.8,465.4 L112.8,465.5 L116.8,465.8 L120.8,465.9 L124.8,465.6 L128.8,465.6 L132.8,465.6 L136.8,465.6 L140.8,465.6 L144.8,465.3 L148.8,465.7 L152.8,466.1 L156.8,465.6 L160.8,465.9 L164.8,465.4 L168.8,465.9 L172.8,465.9 L176.8,465.9 L180.8,465.7 L184.8,465.7 L188.8,465.8 L192.8,466.1 L196.8,465.4 L200.8,465.3 L204.8,465.9 L208.8,466.1 L212.8,465.7 L216.8,465.6 L220.8,465.9 L224.8,465.4 L228.8,465.5 L232.8,465.4 L236.8,465.8 L240.8,465.5 L244.8,465.5 L248.8,465.9 L252.8,466.1 L256.8,465.5 L260.8,465.9 L264.8,465.6 L268.8,466 L272.8,465.8 L276.8,465.5 L280.8,465.4 L284.8,465.3 L288.8,465.7 L292.8,465.6 L296.8,465.4 L300.8,465.6 L304.8,465.5 L308.8,465.9 L312.8,465.4 L316.8,466.1 L320.8,465.7 L324.8,465.8 L328.8,465.7 L332.8,466 L336.8,466 L340.8,465.8 L344.8,465.7 L348.8,465.9 L352.8,466 L356.8,465.6 L360.8,465.9 L364.8,466.1 L368.8,465.7 L372.8,465.5 L376.8,465.5 L380.8,465.9 L384.8,465.9 L388.8,466.1 L392.8,466 L396.8,465.5 L400.8,465.4 L404.8,465.5 L408.8,465.4 L412.8,465.9 L416.8,466 L420.8,466.1 L424.8,465.5 L428.8,466 L432.8,465.5 L436.8,465.6 L440.8,465.9 L444.8,465.3 L448.8,465.3 L452.8,466 L456.8,465.5 L460.8,465.6 L464.8,465.8 L468.8,465.9 L472.8,465.3 L476.8,465.6 L480.8,465.6 L484.8,465.7 L488.8,465.4 L492.8,465.8 L496.8,466.1 L500.8,465.6 L504.8,465.7 L508.8,465.4 L512.8,465.5 L516.8,465.8 L520.8,465.4 L524.8,466 L528.8,466.1 L532.8,465.3 L536.8,466.1 L540.8,465.6 L544.8,465.9 L548.8,465.9 L552.8,465.5 L556.8,465.9 L560.8,465.8 L564.8,466 L568.8,465.5 L572.8,465.9 L576.8,466.1 L580.8,465.9 L584.8,465.7 L588.8,465.4 L592.8,465.7 L596.8,465.6 L600.8,465.9 L604.8,465.9 L608.8,465.8 L612.8,465.4 L616.8,465.8 L620.8,465.8 L624.8,465.4 L628.8,466.1 L632.8,465.8 L636.8,465.4 L640.8,466.1 L644.8,465.4 L648.8,465.5 L652.8,465.9 L656.8,465.8 L660.8,465.7 L664.8,465.8 L668.8,465.7 L672.8,465.5 L676.8,465.4" fill="none" stroke="#3560b0" stroke-width="1.05"/>
<path d="M48.8,514 L52.8,514.6 L56.8,514.6 L60.8,514.4 L64.8,514.6 L68.8,514.3 L72.8,514.2 L76.8,514.3 L80.8,514.7 L84.8,514 L88.8,514.4 L92.8,514.2 L96.8,514.6 L100.8,514.3 L104.8,514.2 L108.8,514.3 L112.8,514.4 L116.8,514.6 L120.8,514.3 L124.8,514.7 L128.8,514.1 L132.8,514.2 L136.8,514 L140.8,514.1 L144.8,514.7 L148.8,514.6 L152.8,514.1 L156.8,514.1 L160.8,514.3 L164.8,514.6 L168.8,514.7 L172.8,514.6 L176.8,514.5 L180.8,514.1 L184.8,514.3 L188.8,514.1 L192.8,514.4 L196.8,514.5 L200.8,514.1 L204.8,514.2 L208.8,514.7 L212.8,514 L216.8,514.7 L220.8,514.8 L224.8,514.8 L228.8,514.3 L232.8,514.4 L236.8,514.5 L240.8,514.5 L244.8,514.8 L248.8,514.6 L252.8,514.2 L256.8,514.7 L260.8,514.4 L264.8,514.5 L268.8,514.6 L272.8,514 L276.8,514.6 L280.8,514.5 L284.8,514.4 L288.8,514.4 L292.8,514.4 L296.8,514.1 L300.8,514.4 L304.8,514 L308.8,514.4 L312.8,514.5 L316.8,514.3 L320.8,514.5 L324.8,514.8 L328.8,514.8 L332.8,514.1 L336.8,514.7 L340.8,514.5 L344.8,514 L348.8,514.3 L352.8,514.2 L356.8,514 L360.8,514.4 L364.8,514.8 L368.8,514.2 L372.8,514.7 L376.8,514.6 L380.8,514.1 L384.8,514.7 L388.8,514.5 L392.8,514.8 L396.8,514.6 L400.8,514.6 L404.8,514.3 L408.8,514.7 L412.8,514.8 L416.8,514.7 L420.8,514.3 L424.8,514.6 L428.8,514.4 L432.8,514 L436.8,514 L440.8,514 L444.8,514.1 L448.8,514.1 L452.8,514.4 L456.8,514.6 L460.8,514.4 L464.8,514.3 L468.8,514.5 L472.8,514.2 L476.8,514.4 L480.8,514.6 L484.8,514.3 L488.8,514.1 L492.8,514.8 L496.8,514.6 L500.8,514.3 L504.8,514.3 L508.8,514.4 L512.8,514.5 L516.8,514.2 L520.8,514 L524.8,514.1 L528.8,514.7 L532.8,514.1 L536.8,514.4 L540.8,514.1 L544.8,514.1 L548.8,514.1 L552.8,514.3 L556.8,514.1 L560.8,514 L564.8,514 L568.8,514.1 L572.8,514.4 L576.8,514 L580.8,514 L584.8,514.4 L588.8,514.3 L592.8,514.6 L596.8,514 L600.8,514.3 L604.8,514.3 L608.8,514 L612.8,514.8 L616.8,514.1 L620.8,514 L624.8,514.4 L628.8,514.1 L632.8,514.5 L636.8,514.3 L640.8,514.1 L644.8,514 L648.8,514.6 L652.8,514.2 L656.8,514.7 L660.8,514.4 L664.8,514.8 L668.8,514.2 L672.8,514.2 L676.8,514.2" fill="none" stroke="#c4b088" stroke-width="1.05"/>
<path d="M48.8,563 L52.8,562.8 L56.8,562.6 L60.8,562.3 L64.8,562.9 L68.8,563.1 L72.8,562.8 L76.8,562.3 L80.8,562.3 L84.8,562.3 L88.8,562.4 L92.8,562.3 L96.8,562.3 L100.8,562.8 L104.8,563.1 L108.8,562.4 L112.8,563.1 L116.8,562.7 L120.8,563 L124.8,563.1 L128.8,563.1 L132.8,562.3 L136.8,562.5 L140.8,562.8 L144.8,563.1 L148.8,562.3 L152.8,562.5 L156.8,563 L160.8,562.4 L164.8,562.6 L168.8,562.6 L172.8,562.9 L176.8,563.1 L180.8,562.4 L184.8,562.9 L188.8,562.9 L192.8,563 L196.8,562.7 L200.8,563.1 L204.8,562.6 L208.8,562.6 L212.8,562.5 L216.8,563 L220.8,562.7 L224.8,562.5 L228.8,562.4 L232.8,562.9 L236.8,562.8 L240.8,562.9 L244.8,562.6 L248.8,562.7 L252.8,562.4 L256.8,562.9 L260.8,562.3 L264.8,562.7 L268.8,562.9 L272.8,562.9 L276.8,562.3 L280.8,562.5 L284.8,563 L288.8,562.8 L292.8,563 L296.8,563 L300.8,562.7 L304.8,563.1 L308.8,562.9 L312.8,562.6 L316.8,562.6 L320.8,562.3 L324.8,562.6 L328.8,563.1 L332.8,562.3 L336.8,562.8 L340.8,562.3 L344.8,562.3 L348.8,562.8 L352.8,562.5 L356.8,562.3 L360.8,562.4 L364.8,562.8 L368.8,562.8 L372.8,562.3 L376.8,562.5 L380.8,563.1 L384.8,562.4 L388.8,562.8 L392.8,562.6 L396.8,563 L400.8,562.8 L404.8,563 L408.8,562.7 L412.8,562.4 L416.8,562.4 L420.8,562.3 L424.8,563 L428.8,562.4 L432.8,562.3 L436.8,563.1 L440.8,562.4 L444.8,563.1 L448.8,562.3 L452.8,562.7 L456.8,562.5 L460.8,563 L464.8,562.8 L468.8,562.8 L472.8,562.9 L476.8,563 L480.8,562.6 L484.8,562.8 L488.8,562.7 L492.8,562.3 L496.8,563 L500.8,562.8 L504.8,563 L508.8,562.4 L512.8,562.7 L516.8,562.7 L520.8,562.9 L524.8,562.3 L528.8,562.6 L532.8,562.7 L536.8,562.3 L540.8,562.7 L544.8,562.9 L548.8,562.6 L552.8,562.8 L556.8,562.8 L560.8,562.4 L564.8,562.6 L568.8,563.1 L572.8,562.6 L576.8,562.6 L580.8,562.3 L584.8,562.4 L588.8,562.4 L592.8,563.1 L596.8,562.9 L600.8,563 L604.8,563.1 L608.8,562.8 L612.8,563.1 L616.8,562.7 L620.8,562.6 L624.8,563.1 L628.8,563.1 L632.8,563.1 L636.8,562.7 L640.8,562.9 L644.8,562.6 L648.8,563.1 L652.8,563.1 L656.8,562.5 L660.8,563.1 L664.8,562.4 L668.8,562.3 L672.8,562.9 L676.8,562.5" fill="none" stroke="#5430b0" stroke-width="1.05"/>
<path d="M48.8,610.6 L52.8,610.7 L56.8,610.2 L60.8,610.8 L64.8,610.4 L68.8,610.5 L72.8,610.5 L76.8,610.8 L80.8,610.8 L84.8,610.4 L88.8,610.2 L92.8,610.4 L96.8,610.5 L100.8,610.2 L104.8,610.3 L108.8,610.8 L112.8,610.8 L116.8,611 L120.8,611 L124.8,610.9 L128.8,610.5 L132.8,610.3 L136.8,610.4 L140.8,610.6 L144.8,610.6 L148.8,610.6 L152.8,610.5 L156.8,610.9 L160.8,610.4 L164.8,610.6 L168.8,610.9 L172.8,610.9 L176.8,610.4 L180.8,610.4 L184.8,610.9 L188.8,610.2 L192.8,610.3 L196.8,610.6 L200.8,610.6 L204.8,610.3 L208.8,610.2 L212.8,610.3 L216.8,610.8 L220.8,610.6 L224.8,611 L228.8,610.9 L232.8,611 L236.8,610.2 L240.8,610.3 L244.8,610.2 L248.8,610.5 L252.8,610.5 L256.8,610.2 L260.8,610.6 L264.8,610.2 L268.8,610.4 L272.8,610.4 L276.8,610.9 L280.8,610.5 L284.8,610.4 L288.8,610.2 L292.8,610.5 L296.8,610.7 L300.8,610.8 L304.8,611 L308.8,610.9 L312.8,610.4 L316.8,610.3 L320.8,610.8 L324.8,610.9 L328.8,610.6 L332.8,610.9 L336.8,610.6 L340.8,610.4 L344.8,610.3 L348.8,610.2 L352.8,610.7 L356.8,611 L360.8,611 L364.8,610.6 L368.8,610.7 L372.8,611 L376.8,610.9 L380.8,610.7 L384.8,610.5 L388.8,610.6 L392.8,610.3 L396.8,610.3 L400.8,610.8 L404.8,611 L408.8,610.6 L412.8,610.5 L416.8,610.5 L420.8,610.6 L424.8,610.9 L428.8,610.6 L432.8,611 L436.8,610.3 L440.8,610.4 L444.8,610.6 L448.8,610.5 L452.8,610.9 L456.8,610.9 L460.8,611 L464.8,610.7 L468.8,610.2 L472.8,610.7 L476.8,610.6 L480.8,610.6 L484.8,610.4 L488.8,610.8 L492.8,611 L496.8,610.2 L500.8,610.8 L504.8,610.5 L508.8,610.6 L512.8,611 L516.8,611 L520.8,610.7 L524.8,610.3 L528.8,611 L532.8,610.3 L536.8,610.5 L540.8,610.9 L544.8,610.4 L548.8,610.4 L552.8,611 L556.8,611 L560.8,610.4 L564.8,610.5 L568.8,610.4 L572.8,610.3 L576.8,610.4 L580.8,611 L584.8,610.2 L588.8,610.4 L592.8,610.3 L596.8,610.2 L600.8,610.6 L604.8,610.8 L608.8,610.9 L612.8,610.7 L616.8,610.9 L620.8,610.2 L624.8,610.4 L628.8,611 L632.8,610.2 L636.8,610.4 L640.8,610.6 L644.8,610.4 L648.8,610.6 L652.8,610.2 L656.8,610.4 L660.8,611 L664.8,610.3 L668.8,611 L672.8,610.3 L676.8,611" fill="none" stroke="#c06084" stroke-width="1.05"/>
<path d="M35 277.5 h9 l3.6 4.2 l-3.6 4.2 h-9z" fill="#f2ee1a"/>
<text x="39.6" y="283.9" font-family="Liberation Sans" font-size="6" font-weight="bold" text-anchor="middle" fill="#333">1</text>
<path d="M35 328 h9 l3.6 4.2 l-3.6 4.2 h-9z" fill="#27d2e0"/>
<text x="39.6" y="334.4" font-family="Liberation Sans" font-size="6" font-weight="bold" text-anchor="middle" fill="#333">2</text>
<path d="M35 363.8 h9 l3.6 4.2 l-3.6 4.2 h-9z" fill="#d82ad8"/>
<text x="39.6" y="370.2" font-family="Liberation Sans" font-size="6" font-weight="bold" text-anchor="middle" fill="#333">3</text>
<path d="M35 412.3 h9 l3.6 4.2 l-3.6 4.2 h-9z" fill="#2fd23a"/>
<text x="39.6" y="418.7" font-family="Liberation Sans" font-size="6" font-weight="bold" text-anchor="middle" fill="#333">4</text>
<path d="M35 460.6 h9 l3.6 4.2 l-3.6 4.2 h-9z" fill="#2e6fe0"/>
<text x="39.6" y="467" font-family="Liberation Sans" font-size="6" font-weight="bold" text-anchor="middle" fill="#333">5</text>
<path d="M35 509.3 h9 l3.6 4.2 l-3.6 4.2 h-9z" fill="#f4d78a"/>
<text x="39.6" y="515.7" font-family="Liberation Sans" font-size="6" font-weight="bold" text-anchor="middle" fill="#333">6</text>
<path d="M35 558 h9 l3.6 4.2 l-3.6 4.2 h-9z" fill="#7a2ad8"/>
<text x="39.6" y="564.4" font-family="Liberation Sans" font-size="6" font-weight="bold" text-anchor="middle" fill="#333">7</text>
<path d="M35 605.7 h9 l3.6 4.2 l-3.6 4.2 h-9z" fill="#f07ab8"/>
<text x="39.6" y="612.1" font-family="Liberation Sans" font-size="6" font-weight="bold" text-anchor="middle" fill="#333">8</text>
<path d="M691.2 277.6 h-8 l-4.5 4.3 l4.5 4.3 h8z" fill="#eef01e"/>
<text x="686.5" y="285" font-family="Liberation Sans" font-weight="bold" font-size="7" text-anchor="middle" fill="#333">T</text>
<path d="M359 234.6 h8.4 v6 l-4.2 3.8 l-4.2 -3.8z" fill="#f0a030"/>
<text x="363.2" y="241.6" font-family="Liberation Sans" font-weight="bold" font-size="7" text-anchor="middle" fill="#7a3a00">T</text>
<rect x="49" y="644" width="637" height="18" fill="#3a3a3a"/>
<rect x="50" y="645" width="67.5" height="16.5" fill="#000"/>
<rect x="50" y="647.8" width="20" height="11.2" fill="#f2ee1a"/>
<text x="50.8" y="657.9" font-family="Liberation Sans" font-size="11" fill="#1a1a00" font-weight="bold" textLength="18.5" lengthAdjust="spacingAndGlyphs">CH1</text>
<path d="M71.3 656h7.7" stroke="#e0dc78" stroke-width="1.1"/>
<path d="M71.3 653.3h7.7" stroke="#e0dc78" stroke-width="0.8" stroke-dasharray="1.6 1" opacity="0.7"/>
<text x="86.5" y="657.9" font-family="Liberation Sans" font-size="11" fill="#e0dc78" textLength="22.5" lengthAdjust="spacingAndGlyphs" stroke="#e0dc78" stroke-width="0.3">2.00V</text>
<rect x="131.3" y="645" width="67.5" height="16.5" fill="#000"/>
<text x="133.3" y="657.9" font-family="Liberation Sans" font-size="11" fill="#2fc0c8" textLength="18.5" lengthAdjust="spacingAndGlyphs" stroke="#2fc0c8" stroke-width="0.3">CH2</text>
<path d="M152.6 656h7.7" stroke="#2fc0c8" stroke-width="1.1"/>
<path d="M152.6 653.3h7.7" stroke="#2fc0c8" stroke-width="0.8" stroke-dasharray="1.6 1" opacity="0.7"/>
<text x="167.8" y="657.9" font-family="Liberation Sans" font-size="11" fill="#2fc0c8" textLength="22.5" lengthAdjust="spacingAndGlyphs" stroke="#2fc0c8" stroke-width="0.3">2.00V</text>
<rect x="212.6" y="645" width="67.5" height="16.5" fill="#000"/>
<text x="214.6" y="657.9" font-family="Liberation Sans" font-size="11" fill="#b030b8" textLength="18.5" lengthAdjust="spacingAndGlyphs" stroke="#b030b8" stroke-width="0.3">CH3</text>
<path d="M233.9 656h7.7" stroke="#b030b8" stroke-width="1.1"/>
<path d="M233.9 653.3h7.7" stroke="#b030b8" stroke-width="0.8" stroke-dasharray="1.6 1" opacity="0.7"/>
<text x="249.1" y="657.9" font-family="Liberation Sans" font-size="11" fill="#b030b8" textLength="22.5" lengthAdjust="spacingAndGlyphs" stroke="#b030b8" stroke-width="0.3">1.00V</text>
<rect x="293.9" y="645" width="67.5" height="16.5" fill="#000"/>
<text x="295.9" y="657.9" font-family="Liberation Sans" font-size="11" fill="#30b830" textLength="18.5" lengthAdjust="spacingAndGlyphs" stroke="#30b830" stroke-width="0.3">CH4</text>
<path d="M315.2 656h7.7" stroke="#30b830" stroke-width="1.1"/>
<path d="M315.2 653.3h7.7" stroke="#30b830" stroke-width="0.8" stroke-dasharray="1.6 1" opacity="0.7"/>
<text x="330.4" y="657.9" font-family="Liberation Sans" font-size="11" fill="#30b830" textLength="22.5" lengthAdjust="spacingAndGlyphs" stroke="#30b830" stroke-width="0.3">1.00V</text>
<rect x="375.2" y="645" width="67.5" height="16.5" fill="#000"/>
<text x="377.2" y="657.9" font-family="Liberation Sans" font-size="11" fill="#2e5fc8" textLength="18.5" lengthAdjust="spacingAndGlyphs" stroke="#2e5fc8" stroke-width="0.3">CH5</text>
<path d="M396.5 656h7.7" stroke="#2e5fc8" stroke-width="1.1"/>
<path d="M396.5 653.3h7.7" stroke="#2e5fc8" stroke-width="0.8" stroke-dasharray="1.6 1" opacity="0.7"/>
<text x="411.7" y="657.9" font-family="Liberation Sans" font-size="11" fill="#2e5fc8" textLength="22.5" lengthAdjust="spacingAndGlyphs" stroke="#2e5fc8" stroke-width="0.3">1.00V</text>
<rect x="456.5" y="645" width="67.5" height="16.5" fill="#000"/>
<text x="458.5" y="657.9" font-family="Liberation Sans" font-size="11" fill="#d8d0a8" textLength="18.5" lengthAdjust="spacingAndGlyphs" stroke="#d8d0a8" stroke-width="0.3">CH6</text>
<path d="M477.8 656h7.7" stroke="#d8d0a8" stroke-width="1.1"/>
<path d="M477.8 653.3h7.7" stroke="#d8d0a8" stroke-width="0.8" stroke-dasharray="1.6 1" opacity="0.7"/>
<text x="493" y="657.9" font-family="Liberation Sans" font-size="11" fill="#d8d0a8" textLength="22.5" lengthAdjust="spacingAndGlyphs" stroke="#d8d0a8" stroke-width="0.3">1.00V</text>
<rect x="537.8" y="645" width="67.5" height="16.5" fill="#000"/>
<text x="539.8" y="657.9" font-family="Liberation Sans" font-size="11" fill="#5a28b8" textLength="18.5" lengthAdjust="spacingAndGlyphs" stroke="#5a28b8" stroke-width="0.3">CH7</text>
<path d="M559.1 656h7.7" stroke="#5a28b8" stroke-width="1.1"/>
<path d="M559.1 653.3h7.7" stroke="#5a28b8" stroke-width="0.8" stroke-dasharray="1.6 1" opacity="0.7"/>
<text x="574.3" y="657.9" font-family="Liberation Sans" font-size="11" fill="#5a28b8" textLength="22.5" lengthAdjust="spacingAndGlyphs" stroke="#5a28b8" stroke-width="0.3">1.00V</text>
<rect x="619.1" y="645" width="67.5" height="16.5" fill="#000"/>
<text x="621.1" y="657.9" font-family="Liberation Sans" font-size="11" fill="#e08ab2" textLength="18.5" lengthAdjust="spacingAndGlyphs" stroke="#e08ab2" stroke-width="0.3">CH8</text>
<path d="M640.4 656h7.7" stroke="#e08ab2" stroke-width="1.1"/>
<path d="M640.4 653.3h7.7" stroke="#e08ab2" stroke-width="0.8" stroke-dasharray="1.6 1" opacity="0.7"/>
<text x="655.6" y="657.9" font-family="Liberation Sans" font-size="11" fill="#e08ab2" textLength="22.5" lengthAdjust="spacingAndGlyphs" stroke="#e08ab2" stroke-width="0.3">1.00V</text>
<rect x="214.6" y="183" width="28.4" height="25" fill="#c4d8ec"/>
<rect x="401.5" y="183" width="28" height="25" fill="#c4d8ec"/>
<rect x="120.5" y="184" width="1.2" height="24" fill="#b0b0b0"/>
<rect x="212" y="184" width="1.2" height="24" fill="#b0b0b0"/>
<rect x="274.6" y="184" width="1.2" height="24" fill="#b0b0b0"/>
<rect x="336.2" y="184" width="1.2" height="24" fill="#b0b0b0"/>
<rect x="369.2" y="184" width="1.2" height="24" fill="#b0b0b0"/>
<rect x="460.8" y="184" width="1.2" height="24" fill="#b0b0b0"/>
<path d="M34.6 190.5 l2 -2.3 h19.3 l2 2.3 v14.2 h-23.3z" fill="url(#gfold)"/>
<rect x="34.6" y="190.3" width="23.3" height="1.2" fill="#e2ecf8" opacity="0.9"/>
<path d="M36.2 188 C44.5 187 51.2 189 51.2 196 V198.3 H54.8 L48.3 205.6 L41.8 198.3 H45.4 V196.6 C45.4 193.2 42 192.6 36.2 193.2 Z" fill="url(#ggreen)" stroke="#5a9a22" stroke-width="0.5"/>
<path d="M66 187.7 h15.5 l3.3 3.3 v14.8 h-18.8z" fill="#6f98d0"/>
<rect x="69.8" y="188.8" width="11.8" height="4.5" fill="#dfe9f6"/>
<rect x="71.5" y="189.5" width="2" height="3" fill="#6f98d0"/>
<rect x="69" y="200" width="12.6" height="4.8" fill="#f4f7fb"/>
<rect x="97.5" y="186" width="13" height="6.5" fill="#fafbfc" stroke="#7d9cc4" stroke-width="1"/>
<rect x="93.5" y="192" width="21" height="8" fill="#f2f4f6" stroke="#a8b8c8" stroke-width="0.8"/>
<rect x="94" y="192" width="20" height="4.5" fill="#4d78ad"/>
<path d="M97.5 206 v-6.5 h13.5 v6.5" fill="#fafafa" stroke="#2f4c70" stroke-width="1.8"/>
<rect x="127.7" y="187.2" width="19.7" height="20.1" rx="1" fill="url(#gblue)"/><rect x="127.7" y="187.2" width="19.7" height="9" rx="1" fill="url(#ghl)"/>
<text x="137.9" y="203.3" font-family="Liberation Sans" font-weight="bold" font-size="16.5" text-anchor="middle" fill="#fff" stroke="#fff" stroke-width="0.9">H</text>
<rect x="155.6" y="187.2" width="20.7" height="20.1" rx="1" fill="url(#gblue)"/><rect x="155.6" y="187.2" width="20.7" height="9" rx="1" fill="url(#ghl)"/>
<text x="166.2" y="203.3" font-family="Liberation Sans" font-weight="bold" font-size="16.5" text-anchor="middle" fill="#fff" stroke="#fff" stroke-width="0.9">V</text>
<rect x="185" y="187.2" width="20.7" height="20.1" rx="1" fill="url(#gblue)"/><rect x="185" y="187.2" width="20.7" height="9" rx="1" fill="url(#ghl)"/>
<text x="195.7" y="203.3" font-family="Liberation Sans" font-weight="bold" font-size="16.5" text-anchor="middle" fill="#fff" stroke="#fff" stroke-width="0.9">T</text>
<rect x="219.3" y="187.2" width="21.2" height="20.1" rx="1" fill="url(#gblue)"/><rect x="219.3" y="187.2" width="21.2" height="9" rx="1" fill="url(#ghl)"/>
<path d="M220.3 203.2 h4 v-12.4 h9 v12.4 h4.8" fill="none" stroke="#f4f8fc" stroke-width="2.1"/>
<rect x="247.7" y="187.2" width="20.2" height="20.1" rx="1" fill="url(#gblue)"/><rect x="247.7" y="187.2" width="20.2" height="9" rx="1" fill="url(#ghl)"/>
<path d="M253.8 190.8 h8.6" stroke="#f4f8fc" stroke-width="1.8"/>
<path d="M254.6 192 v10 M262 192 v10" stroke="#f4f8fc" stroke-width="1.6" stroke-dasharray="2 1.4"/>
<path d="M249 203.2 h5 M262 203.2 h5" stroke="#f4f8fc" stroke-width="1.8"/>
<rect x="280.5" y="187.2" width="21" height="20.1" rx="1" fill="url(#gblue)"/><rect x="280.5" y="187.2" width="21" height="9" rx="1" fill="url(#ghl)"/>
<path d="M284 191.5 h5 M286.5 189 v5 M293 191.5 h5 M284 198 l4 4 M288 198 l-4 4 M293 200 h5 M295.5 197.5 v5" stroke="#f4f8fc" stroke-width="1.6"/>
<rect x="309.8" y="187.2" width="20.7" height="20.1" rx="1" fill="url(#gblue)"/><rect x="309.8" y="187.2" width="20.7" height="9" rx="1" fill="url(#ghl)"/>
<text x="320" y="202.9" font-family="Liberation Sans" font-weight="bold" font-size="16.5" text-anchor="middle" fill="#fff" stroke="#fff" stroke-width="0.9">R</text>
<rect x="343.4" y="187.2" width="19.6" height="20.1" rx="1" fill="url(#gblue)"/><rect x="343.4" y="187.2" width="19.6" height="9" rx="1" fill="url(#ghl)"/>
<path d="M351.6 195 l0 8.2 l2.5 -2.2 l3.6 4.4 l2 -1.6 l-3.6 -4.3 l3.2 -1.2z" fill="#fff"/>
<path d="M346.5 190.5 h12" stroke="#9cc6ec" stroke-width="1" stroke-dasharray="1.5 1.5" opacity="0.8"/>
<path d="M346.5 191 v13" stroke="#9cc6ec" stroke-width="1" stroke-dasharray="1.5 1.5" opacity="0.8"/>
<circle cx="387.3" cy="197" r="10" fill="url(#ggray)"/>
<text x="387.3" y="195.6" font-family="Liberation Sans" font-weight="bold" font-size="7.8" text-anchor="middle" fill="#fff">AU</text>
<text x="387.3" y="202.6" font-family="Liberation Sans" font-weight="bold" font-size="7.8" text-anchor="middle" fill="#fff">TO</text>
<circle cx="416.3" cy="197" r="10.2" fill="url(#gcirc)"/>
<path d="M413.5 191.5 l8.2 5.5 l-8.2 5.5z" fill="#fff"/>
<circle cx="444.9" cy="197" r="10.2" fill="url(#gcirc)"/>
<rect x="441.2" y="191.8" width="2.6" height="10.4" fill="#fff"/><rect x="446.1" y="191.8" width="2.6" height="10.4" fill="#fff"/>
<circle cx="481.4" cy="194.9" r="6.4" fill="#f0f2f4" stroke="#4a4a4a" stroke-width="2"/>
<path d="M477 199.5 l-6 5.5" stroke="#4a4a4a" stroke-width="2.4" stroke-linecap="round"/>
<path d="M478.4 194.9 h6 M481.4 191.9 v6" stroke="#4a4a4a" stroke-width="2"/>
<circle cx="509.6" cy="194.9" r="6.4" fill="#f0f2f4" stroke="#4a4a4a" stroke-width="2"/>
<path d="M505.2 199.5 l-6 5.5" stroke="#4a4a4a" stroke-width="2.4" stroke-linecap="round"/>
<path d="M506.6 194.9 h6" stroke="#4a4a4a" stroke-width="2"/>
<circle cx="536.3" cy="197" r="10" fill="url(#ggray2)"/>
<path d="M542 193.5 h-10.5 l3 -3 M530.5 200.5 h10.5 l-3 3" fill="none" stroke="#e8e8e8" stroke-width="1.4"/>
<rect x="34.5" y="214.2" width="37.3" height="15.5" fill="#000"/>
<text x="41.3" y="224.5" font-family="Liberation Sans" font-size="8.8" fill="#34a834" textLength="23" lengthAdjust="spacingAndGlyphs">Trig'D</text>
<rect x="312" y="214.3" width="102.3" height="15.3" fill="#000"/>
<path d="M315.5,224.6 L316,223.9 L316.5,223.3 L317,222.8 L317.5,222.6 L318,222.7 L318.5,223 L319,223.5 L319.5,224.1 L320,224.8 L320.5,225.3 L321,225.7 L321.5,225.8 L322,225.6 L322.5,225.2 L323,224.6 L323.5,223.9 L324,223.3 L324.5,222.8 L325,222.6 L325.5,222.7 L326,223 L326.5,223.5 L327,224.1 L327.5,224.8 L328,225.3 L328.5,225.7 L329,225.8 L329.5,225.6 L330,225.2 L330.5,224.6 L331,223.9 L331.5,223.3 L332,222.8 L332.5,222.6 L333,222.7 L333.5,223 L334,223.5 L334.5,224.1 L335,224.8 L335.5,225.3 L336,225.7 L336.5,225.8 L337,225.6 L337.5,225.2 L338,224.6 L338.5,223.9 L339,223.3 L339.5,222.8 L340,222.6 L340.5,222.7 L341,223 L341.5,223.5 L342,224.1 L342.5,224.8 L343,225.3 L343.5,225.7 L344,225.8 L344.5,225.6 L345,225.2 L345.5,224.6 L346,223.9 L346.5,223.3 L347,222.8 L347.5,222.6 L348,222.7 L348.5,223 L349,223.5 L349.5,224.1 L350,224.8 L350.5,225.3 L351,225.7 L351.5,225.8 L352,225.6 L352.5,225.2 L353,224.6 L353.5,223.9 L354,223.3 L354.5,222.8 L355,222.6 L355.5,222.7 L356,223 L356.5,223.5 L357,224.1 L357.5,224.8 L358,225.3 L358.5,225.7 L359,225.8 L359.5,225.6 L360,225.2 L360.5,224.6 L361,223.9 L361.5,223.3 L362,222.8 L362.5,222.6 L363,222.7 L363.5,223 L364,223.5 L364.5,224.1 L365,224.8 L365.5,225.3 L366,225.7 L366.5,225.8 L367,225.6 L367.5,225.2 L368,224.6 L368.5,223.9 L369,223.3 L369.5,222.8 L370,222.6 L370.5,222.7 L371,223 L371.5,223.5 L372,224.1 L372.5,224.8 L373,225.3 L373.5,225.7 L374,225.8 L374.5,225.6 L375,225.2 L375.5,224.6 L376,223.9 L376.5,223.3 L377,222.8 L377.5,222.6 L378,222.7 L378.5,223 L379,223.5 L379.5,224.1 L380,224.8 L380.5,225.3 L381,225.7 L381.5,225.8 L382,225.6 L382.5,225.2 L383,224.6 L383.5,223.9 L384,223.3 L384.5,222.8 L385,222.6 L385.5,222.7 L386,223 L386.5,223.5 L387,224.1 L387.5,224.8 L388,225.3 L388.5,225.7 L389,225.8 L389.5,225.6 L390,225.2 L390.5,224.6 L391,223.9 L391.5,223.3 L392,222.8 L392.5,222.6 L393,222.7 L393.5,223 L394,223.5 L394.5,224.1 L395,224.8 L395.5,225.3 L396,225.7 L396.5,225.8 L397,225.6 L397.5,225.2 L398,224.6 L398.5,223.9 L399,223.3 L399.5,222.8 L400,222.6 L400.5,222.7 L401,223 L401.5,223.5 L402,224.1 L402.5,224.8 L403,225.3 L403.5,225.7 L404,225.8 L404.5,225.6 L405,225.2 L405.5,224.6 L406,223.9 L406.5,223.3 L407,222.8 L407.5,222.6 L408,222.7 L408.5,223 L409,223.5 L409.5,224.1 L410,224.8" fill="none" stroke="#3c9a4a" stroke-width="1.1"/>
<path d="M314.9 218.3 v10.9 M410.4 218.3 v10.9" stroke="#44b4a4" stroke-width="1.3"/>
<path d="M363.5 215 v5 M361.8 215.5 h3.4" stroke="#5c5c5c" stroke-width="0.8"/>
<rect x="528" y="214" width="68" height="16" fill="#000"/>
<text x="529.6" y="226.5" font-family="Liberation Sans" font-size="11" fill="#c98a4e" textLength="59" lengthAdjust="spacingAndGlyphs">Time: 1.000ms</text>
<rect x="619" y="214" width="70" height="16" fill="#000"/>
<path d="M619.6 228.3 h3.4 v-11.3 h3.2" fill="none" stroke="#f2ee1a" stroke-width="1.2"/><path d="M620.8 223.8 l2.2 -2.6 l2.2 2.6" fill="none" stroke="#f2ee1a" stroke-width="1"/>
<rect x="630" y="217.4" width="20.4" height="11.3" fill="#f2ee1a"/>
<text x="630.8" y="226.8" font-family="Liberation Sans" font-size="11" fill="#1a1a00" font-weight="bold" textLength="19" lengthAdjust="spacingAndGlyphs">CH1</text>
<text x="659.2" y="226.3" font-family="Liberation Sans" font-size="11" fill="#d2d090" textLength="27.3" lengthAdjust="spacingAndGlyphs">0.00uV</text>
<rect x="697" y="191.5" width="129" height="88" fill="none" stroke="#262626" stroke-width="1.2"/>
<rect x="698" y="192.7" width="127" height="1" fill="#5a5a5a"/>
<rect x="702" y="186.5" width="24" height="10" fill="#3b3b3b"/>
<text x="704.7" y="193.8" font-family="Liberation Sans" font-size="9.2" fill="#d4d6d8" textLength="19.3" lengthAdjust="spacingAndGlyphs">Utility</text>
<rect x="697" y="303.5" width="129" height="71" fill="none" stroke="#262626" stroke-width="1.2"/>
<rect x="698" y="304.7" width="127" height="1" fill="#5a5a5a"/>
<rect x="702" y="298.5" width="70" height="10" fill="#3b3b3b"/>
<text x="704.7" y="305.9" font-family="Liberation Sans" font-size="9.2" fill="#d4d6d8" textLength="60" lengthAdjust="spacingAndGlyphs">Acquisition mode</text>
<rect x="697" y="391.5" width="129" height="40" fill="none" stroke="#262626" stroke-width="1.2"/>
<rect x="698" y="392.7" width="127" height="1" fill="#5a5a5a"/>
<rect x="702" y="386.5" width="70" height="10" fill="#3b3b3b"/>
<text x="704.7" y="393.6" font-family="Liberation Sans" font-size="9.2" fill="#d4d6d8" textLength="63.3" lengthAdjust="spacingAndGlyphs">Zoom Horizontally</text>
<rect x="697" y="445.5" width="129" height="90" fill="none" stroke="#262626" stroke-width="1.2"/>
<rect x="698" y="446.7" width="127" height="1" fill="#5a5a5a"/>
<rect x="702" y="440.5" width="60" height="10" fill="#3b3b3b"/>
<text x="704.7" y="445" font-family="Liberation Sans" font-size="9.2" fill="#d4d6d8" textLength="53.3" lengthAdjust="spacingAndGlyphs">Zoom vertically</text>
<rect x="703.2" y="200.2" width="36" height="32" fill="#262a2e"/>
<rect x="704" y="201" width="35.5" height="31.5" fill="#4b525a"/>
<rect x="704" y="201" width="35.5" height="1.2" fill="#5f666e"/>
<rect x="743.7" y="200.2" width="36" height="32" fill="#4e4e4e"/>
<rect x="744.5" y="201" width="35.5" height="31.5" fill="#6a6a6a"/>
<rect x="744.5" y="201" width="35.5" height="1.2" fill="#7a7a7a"/>
<rect x="745.3" y="201.8" width="34" height="30" fill="none" stroke="#7c7c7c" stroke-width="1"/>
<rect x="784.2" y="200.2" width="36" height="32" fill="#4e4e4e"/>
<rect x="785" y="201" width="35.5" height="31.5" fill="#6a6a6a"/>
<rect x="785" y="201" width="35.5" height="1.2" fill="#7a7a7a"/>
<rect x="785.8" y="201.8" width="34" height="30" fill="none" stroke="#7c7c7c" stroke-width="1"/>
<rect x="703.2" y="239.7" width="36" height="32" fill="#262a2e"/>
<rect x="704" y="240.5" width="35.5" height="31.5" fill="#4b525a"/>
<rect x="704" y="240.5" width="35.5" height="1.2" fill="#5f666e"/>
<rect x="743.7" y="239.7" width="36" height="32" fill="#262a2e"/>
<rect x="744.5" y="240.5" width="35.5" height="31.5" fill="#4b525a"/>
<rect x="744.5" y="240.5" width="35.5" height="1.2" fill="#5f666e"/>
<rect x="784.2" y="239.7" width="36" height="32" fill="#262a2e"/>
<rect x="785" y="240.5" width="35.5" height="31.5" fill="#4b525a"/>
<rect x="785" y="240.5" width="35.5" height="1.2" fill="#5f666e"/>
<path d="M709 216.5 l11.5 -10 v6 h8 a4.5 4.5 0 0 1 0 9 h-8 v6z" fill="#bcd8ee"/>
<path d="M751.6 216 H757 C759 216 760.5 206.5 762.5 206.5 C764.5 206.5 764 225 765.5 225 C767 225 767.5 216 769.5 216 H772.7" fill="none" stroke="#909090" stroke-width="1.5"/>
<path d="M800.2 212.2 A7 7 0 1 1 801.5 223.3" fill="none" stroke="#8e8e8e" stroke-width="2.2"/><path d="M793.5 217.8 L796.5 210.8 L803 215.5z" fill="#8e8e8e"/>
<circle cx="714" cy="256.5" r="3.3" fill="#cfe3f3"/>
<circle cx="722" cy="256.5" r="3.3" fill="#cfe3f3"/>
<circle cx="730" cy="256.5" r="3.3" fill="#cfe3f3"/>
<g fill="#c8ddf0"><rect x="750.5" y="245" width="9" height="9"/><rect x="766" y="245" width="9" height="9"/><rect x="750.5" y="261" width="9" height="9"/></g><g fill="#4b525a"><rect x="752.5" y="247" width="5" height="5"/><rect x="768" y="247" width="5" height="5"/><rect x="752.5" y="263" width="5" height="5"/></g><g fill="#c8ddf0"><rect x="754" y="248.5" width="2" height="2"/><rect x="769.5" y="248.5" width="2" height="2"/><rect x="754" y="264.5" width="2" height="2"/><rect x="761" y="246" width="2.6" height="2.6"/><rect x="761" y="250" width="2.6" height="2.6"/><rect x="762.5" y="255" width="2.6" height="2.6"/><rect x="752" y="256" width="2.6" height="2.6"/><rect x="756" y="257" width="2.6" height="2.6"/><rect x="761" y="259" width="2.6" height="2.6"/><rect x="766" y="257" width="2.6" height="2.6"/><rect x="770" y="256" width="2.6" height="2.6"/><rect x="774" y="258" width="2.6" height="2.6"/><rect x="762" y="263" width="2.6" height="2.6"/><rect x="766" y="262" width="2.6" height="2.6"/><rect x="771" y="262" width="2.6" height="2.6"/><rect x="764" y="267" width="2.6" height="2.6"/><rect x="768" y="266" width="2.6" height="2.6"/><rect x="773" y="267" width="2.6" height="2.6"/><rect x="761" y="269" width="2.6" height="2.6"/></g>
<path d="M790 249 h7 l2 -3 h10 l2 3 h6 v19 h-27z" fill="#c3dcf0"/>
<circle cx="803.5" cy="258" r="6.5" fill="none" stroke="#3a4048" stroke-width="2.2"/>
<circle cx="711.2" cy="316.8" r="4.2" fill="#f4f4f4" stroke="#9a9a9a" stroke-width="0.6"/>
<circle cx="711.2" cy="316.8" r="1.5" fill="#111"/>
<text x="719.7" y="319.7" font-family="Liberation Sans" font-size="9.2" fill="#d8dadc" textLength="16" lengthAdjust="spacingAndGlyphs">Auto</text>
<circle cx="711.2" cy="337.8" r="4.2" fill="#f4f4f4" stroke="#9a9a9a" stroke-width="0.6"/>
<text x="719.7" y="340.7" font-family="Liberation Sans" font-size="9.2" fill="#d8dadc" textLength="24" lengthAdjust="spacingAndGlyphs">Normal</text>
<circle cx="711.2" cy="358.6" r="4.2" fill="#f4f4f4" stroke="#9a9a9a" stroke-width="0.6"/>
<text x="719.7" y="361.5" font-family="Liberation Sans" font-size="9.2" fill="#d8dadc" textLength="20.3" lengthAdjust="spacingAndGlyphs">Single</text>
<rect x="766.5" y="320.8" width="37" height="33" fill="#262a2e"/>
<rect x="767.3" y="321.5" width="35.5" height="31.5" fill="#4b525a"/>
<path d="M778.5 330.5 l13.5 7.8 l-13.5 7.8z" fill="#18e018"/>
<rect x="705.6" y="403" width="24" height="14" fill="#26292c"/>
<rect x="706.1" y="403.5" width="23" height="13" fill="url(#gbtn)"/>
<path d="M719.6 406.2 l-4 3.8 l4 3.8" fill="none" stroke="#9aa3ab" stroke-width="1.1"/>
<rect x="737.5" y="402.8" width="49" height="15.2" fill="#3a3a3a" stroke="#e6e6e6" stroke-width="1.6"/>
<text x="739.8" y="413.7" font-family="Liberation Sans" font-size="9.4" fill="#dcdcdc" textLength="30.4" lengthAdjust="spacingAndGlyphs">1.000ms</text>
<rect x="774.5" y="403.8" width="11" height="13.2" fill="#f2f2f2"/>
<path d="M777 409.2 h6 l-3 3.2z" fill="#111"/>
<rect x="792.9" y="403" width="24" height="14" fill="#26292c"/>
<rect x="793.4" y="403.5" width="23" height="13" fill="url(#gbtn)"/>
<path d="M802.9 406.2 l4 3.8 l-4 3.8" fill="none" stroke="#9aa3ab" stroke-width="1.1"/>
<rect x="705.6" y="453.6" width="24" height="13" fill="#26292c"/><rect x="706.1" y="454.1" width="23" height="12" fill="url(#gbtn)"/>
<text x="717.6" y="463.8" font-family="Liberation Serif" font-size="10" text-anchor="middle" fill="#c8ced4">CH</text>
<rect x="734.8" y="453.5" width="49.5" height="14.2" fill="#3a3a3a" stroke="#e6e6e6" stroke-width="1.6"/>
<text x="737.1" y="463.9" font-family="Liberation Sans" font-size="9.4" fill="#dcdcdc" textLength="13.7" lengthAdjust="spacingAndGlyphs">CH1</text>
<rect x="772.3" y="454.5" width="11" height="12.2" fill="#f2f2f2"/>
<path d="M774.8 459.4 h6 l-3 3.2z" fill="#111"/>
<rect x="789.3" y="455" width="9" height="10" fill="#f2f2f2"/>
<path d="M790.8 460 l2.3 2.6 l4 -5.5" fill="none" stroke="#111" stroke-width="1.6"/>
<clipPath id="cpo"><rect x="800" y="450" width="28" height="20"/></clipPath>
<text x="802" y="464" font-family="Liberation Sans" font-size="9.5" fill="#d8d8d8" textLength="29" lengthAdjust="spacingAndGlyphs" clip-path="url(#cpo)">ON/OFF</text>
<rect x="705.6" y="479" width="24" height="14" fill="#26292c"/>
<rect x="706.1" y="479.5" width="23" height="13" fill="url(#gbtn)"/>
<path d="M719.6 482.2 l-4 3.8 l4 3.8" fill="none" stroke="#9aa3ab" stroke-width="1.1"/>
<rect x="734.8" y="478.8" width="49.5" height="15" fill="#3a3a3a" stroke="#e6e6e6" stroke-width="1.6"/>
<text x="737.1" y="489.6" font-family="Liberation Sans" font-size="9.4" fill="#dcdcdc" textLength="22" lengthAdjust="spacingAndGlyphs">2.00V</text>
<rect x="772.3" y="479.8" width="11" height="13" fill="#3a3a3a"/>
<rect x="772.8" y="480.3" width="10" height="5.5" fill="#e8e8e8"/>
<rect x="772.8" y="486.8" width="10" height="5.5" fill="#e8e8e8"/>
<path d="M777.3 483.8 l1.2 -1.2 l1.2 1.2z M777.3 488.8 l1.2 1.2 l1.2 -1.2z" fill="#111"/>
<rect x="792.5" y="479" width="24" height="14" fill="#26292c"/>
<rect x="793" y="479.5" width="23" height="13" fill="url(#gbtn)"/>
<path d="M802.5 482.2 l4 3.8 l-4 3.8" fill="none" stroke="#9aa3ab" stroke-width="1.1"/>
<rect x="705.6" y="504.6" width="24" height="14" fill="#26292c"/>
<rect x="706.1" y="505.1" width="23" height="13" fill="url(#gbtn)"/>
<path d="M719.6 507.8 l-4 3.8 l4 3.8" fill="none" stroke="#9aa3ab" stroke-width="1.1"/>
<rect x="734.8" y="504.4" width="49.5" height="15" fill="#3a3a3a" stroke="#e6e6e6" stroke-width="1.6"/>
<text x="737.1" y="515.2" font-family="Liberation Sans" font-size="9.4" fill="#dcdcdc" textLength="9.2" lengthAdjust="spacingAndGlyphs">x1</text>
<rect x="772.3" y="505.4" width="11" height="13" fill="#f2f2f2"/>
<path d="M774.8 510.7 h6 l-3 3.2z" fill="#111"/>
<rect x="792.5" y="504.6" width="24" height="14" fill="#26292c"/>
<rect x="793" y="505.1" width="23" height="13" fill="url(#gbtn)"/>
<path d="M802.5 507.8 l4 3.8 l-4 3.8" fill="none" stroke="#9aa3ab" stroke-width="1.1"/>
<path d="M833 676 l4 -4 v4z" fill="#c8c8c8" opacity="0.7"/>
<rect x="33" y="181" width="517" height="29.5" rx="6" fill="none" stroke="#ab262e" stroke-width="1.9"/>
<rect x="525.5" y="213" width="73" height="17.5" rx="3" fill="none" stroke="#ab262e" stroke-width="1.9"/>
<rect x="617.5" y="213" width="73" height="17.5" rx="3" fill="none" stroke="#ab262e" stroke-width="1.9"/>
<rect x="698" y="184.3" width="131" height="90.2" rx="11" fill="none" stroke="#ab262e" stroke-width="1.9"/>
<rect x="698.8" y="287" width="130.2" height="86" rx="11" fill="none" stroke="#ab262e" stroke-width="1.9"/>
<rect x="699.5" y="382.8" width="129.5" height="48.2" rx="9" fill="none" stroke="#ab262e" stroke-width="1.9"/>
<rect x="699.5" y="434.5" width="130.3" height="97" rx="11" fill="none" stroke="#ab262e" stroke-width="1.9"/>
<rect x="33.8" y="213.2" width="39.5" height="17.4" rx="2" fill="none" stroke="#ab262e" stroke-width="1.9"/>
<rect x="308.5" y="212" width="110.3" height="19" rx="3" fill="none" stroke="#ab262e" stroke-width="1.9"/>
<rect x="32" y="274.5" width="17.8" height="345" rx="2" fill="none" stroke="#ab262e" stroke-width="1.9"/>
<rect x="49.5" y="643" width="635.5" height="20.5" rx="3" fill="none" stroke="#ab262e" stroke-width="1.9"/>
<rect x="29.5" y="665.5" width="54" height="13.3" rx="3" fill="none" stroke="#ab262e" stroke-width="1.9"/>
<rect x="733.8" y="664" width="89" height="15" rx="4" fill="none" stroke="#ab262e" stroke-width="1.9"/>
<ellipse cx="363.2" cy="239.8" rx="11.5" ry="8" fill="none" stroke="#ab262e" stroke-width="1.9"/>
<circle cx="685.8" cy="282.2" r="9.2" fill="none" stroke="#ab262e" stroke-width="1.9"/>
<path d="M529.8 143 V181" fill="none" stroke="#ab262e" stroke-width="1.9"/>
<path d="M567.4 143 V213" fill="none" stroke="#ab262e" stroke-width="1.9"/>
<path d="M655 143 V213" fill="none" stroke="#ab262e" stroke-width="1.9"/>
<path d="M829 229.8 H848.2" fill="none" stroke="#ab262e" stroke-width="1.9"/>
<path d="M829 332.3 H848.2" fill="none" stroke="#ab262e" stroke-width="1.9"/>
<path d="M829 408.6 H848.2" fill="none" stroke="#ab262e" stroke-width="1.9"/>
<path d="M829.8 491.4 H848.2" fill="none" stroke="#ab262e" stroke-width="1.9"/>
<path d="M685.8 291.4 V599 H848.2" fill="none" stroke="#ab262e" stroke-width="1.9"/>
<path d="M778.6 679 V689.4" fill="none" stroke="#ab262e" stroke-width="1.9"/>
<path d="M482 663.5 V689.3" fill="none" stroke="#ab262e" stroke-width="1.9"/>
<path d="M55.3 678.8 V689.4" fill="none" stroke="#ab262e" stroke-width="1.9"/>
<path d="M19.2 221 H34" fill="none" stroke="#ab262e" stroke-width="1.9"/>
<path d="M19.2 249 H338.5 V231" fill="none" stroke="#ab262e" stroke-width="1.9"/>
<path d="M19.2 270.2 H362 V247.8" fill="none" stroke="#ab262e" stroke-width="1.9"/>
<path d="M19.5 390.3 H32" fill="none" stroke="#ab262e" stroke-width="1.9"/>
<path d="M529.6 129.4 V141.6 M530.1 130.2 L526.5 133.2" fill="none" stroke="#ab262e" stroke-width="1.9"/>
<text x="562.1" y="141.6" font-family="Liberation Sans" font-size="16.7" fill="#ab262e" stroke="#ab262e" stroke-width="0.35">2</text>
<text x="650.3" y="141.6" font-family="Liberation Sans" font-size="16.7" fill="#ab262e" stroke="#ab262e" stroke-width="0.35">3</text>
<text x="849.8" y="234.8" font-family="Liberation Sans" font-size="16.7" fill="#ab262e" stroke="#ab262e" stroke-width="0.35">4</text>
<text x="850.3" y="337.8" font-family="Liberation Sans" font-size="16.7" fill="#ab262e" stroke="#ab262e" stroke-width="0.35">5</text>
<text x="850.2" y="414" font-family="Liberation Sans" font-size="16.7" fill="#ab262e" stroke="#ab262e" stroke-width="0.35">6</text>
<text x="849.3" y="496.2" font-family="Liberation Sans" font-size="16.7" fill="#ab262e" stroke="#ab262e" stroke-width="0.35">7</text>
<text x="849.6" y="604" font-family="Liberation Sans" font-size="16.7" fill="#ab262e" stroke="#ab262e" stroke-width="0.35">8</text>
<text x="774.7" y="702.8" font-family="Liberation Sans" font-size="16.7" fill="#ab262e" stroke="#ab262e" stroke-width="0.35">9</text>
<path d="M477.4 691.2 V703.4 M477.9 692 L474.3 695" fill="none" stroke="#ab262e" stroke-width="1.9"/>
<text x="481.7" y="703.4" font-family="Liberation Sans" font-size="16.7" fill="#ab262e" stroke="#ab262e" stroke-width="0.35">0</text>
<path d="M51.2 690.6 V702.8 M51.7 691.4 L48.1 694.4" fill="none" stroke="#ab262e" stroke-width="1.9"/>
<path d="M60.5 690.6 V702.8 M61 691.4 L57.4 694.4" fill="none" stroke="#ab262e" stroke-width="1.9"/>
<path d="M4.3 384.7 V396.9 M4.8 385.5 L1.2 388.5" fill="none" stroke="#ab262e" stroke-width="1.9"/>
<text x="8.6" y="396.9" font-family="Liberation Sans" font-size="16.7" fill="#ab262e" stroke="#ab262e" stroke-width="0.35">2</text>
<path d="M4.3 264.2 V276.4 M4.8 265 L1.2 268" fill="none" stroke="#ab262e" stroke-width="1.9"/>
<text x="8.6" y="276.4" font-family="Liberation Sans" font-size="16.7" fill="#ab262e" stroke="#ab262e" stroke-width="0.35">3</text>
<path d="M4.3 241.8 V254 M4.8 242.6 L1.2 245.6" fill="none" stroke="#ab262e" stroke-width="1.9"/>
<text x="8.6" y="254" font-family="Liberation Sans" font-size="16.7" fill="#ab262e" stroke="#ab262e" stroke-width="0.35">4</text>
<path d="M4.3 214.2 V226.4 M4.8 215 L1.2 218" fill="none" stroke="#ab262e" stroke-width="1.9"/>
<text x="8.6" y="226.4" font-family="Liberation Sans" font-size="16.7" fill="#ab262e" stroke="#ab262e" stroke-width="0.35">5</text>
</svg>
</body></html>
